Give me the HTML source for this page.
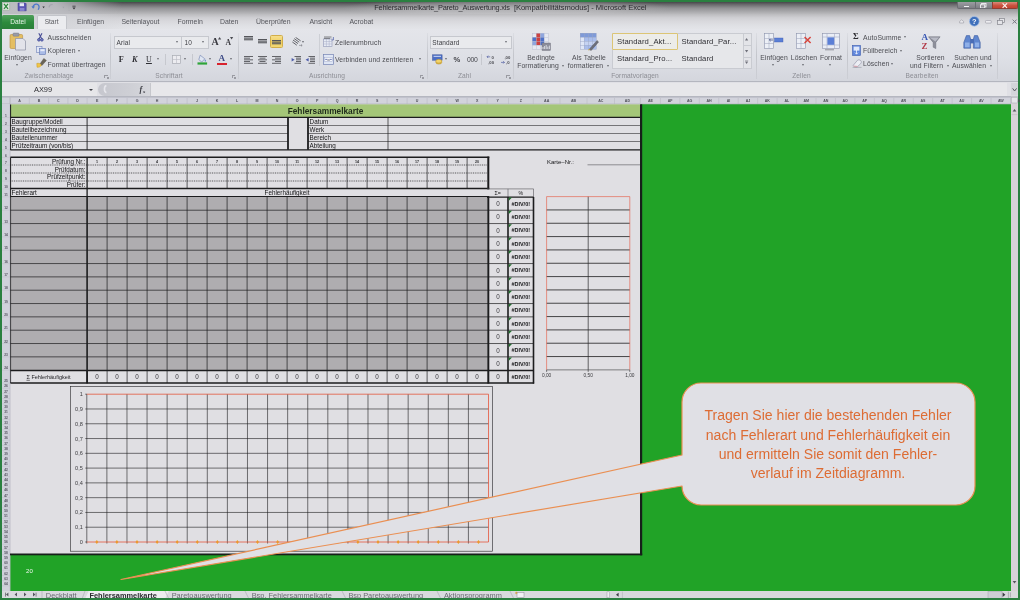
<!DOCTYPE html><html lang="de"><head><meta charset="utf-8"><title>Fehlersammelkarte_Pareto_Auswertung.xls - Microsoft Excel</title><style>

*{box-sizing:border-box;margin:0;padding:0}
html,body{width:1020px;height:600px;overflow:hidden}
body{background:#2a8040;font-family:"Liberation Sans",sans-serif;position:relative;color:#3a3a3e}
#win,#sheet{filter:blur(.25px)}
#win{position:absolute;left:2px;top:2px;width:1016px;height:596px;overflow:hidden;background:#e2e2e5}
.abs{position:absolute}
#titlebar{left:0;top:0;width:1016px;height:11.5px;background:linear-gradient(#47474a 0%,#68686b 20%,#919194 50%,#b9b9bc 100%)}
#titlebar .fadeL{left:0;top:0;width:120px;height:11.5px;background:linear-gradient(90deg,#bcbdc2 0%,rgba(188,189,194,.92) 45%,rgba(188,189,194,0) 100%)}
#titlebar .fadeR{left:340px;top:0;width:330px;height:11.5px;background:radial-gradient(ellipse 50% 90% at 50% 50%,rgba(205,205,208,.5) 0%,rgba(205,205,208,.35) 60%,rgba(205,205,208,0) 100%)}
#title{left:372.2px;top:1px;font-size:7.4px;line-height:9px;color:#2c2c30;white-space:nowrap;letter-spacing:-0.05px}
#tabrow{left:0;top:11.5px;width:1016px;height:15.5px;background:linear-gradient(#bbbbbe 0%,#cfcfd3 25%,#d9d9dd 50%,#e0e1e5 80%,#e3e4e8 100%)}
#tabrow .fadeL{left:0;top:0;width:130px;height:16px;background:linear-gradient(90deg,#d2d3d7 0%,rgba(210,211,215,.9) 40%,rgba(210,211,215,0) 100%)}
.tab{position:absolute;top:3px;font-size:6.9px;line-height:10px;color:#55565c;white-space:nowrap}
#datei{left:0;top:1.2px;width:32px;height:14.3px;background:linear-gradient(#4fa05a,#2c8a3c 55%,#2a7f38);border-radius:1.5px 1.5px 0 0;color:#e9f3ea;font-size:6.6px;line-height:13px;text-align:center}
#start{left:34.6px;top:1.6px;width:30px;height:14.4px;background:#ebecef;border:0.5px solid #c3c5ca;border-bottom:none;border-radius:2px 2px 0 0;color:#5a5b60;font-size:6.6px;line-height:12.5px;text-align:center}
#ribbon{left:0;top:27px;width:1016px;height:53px;background:linear-gradient(#e4e5ea 0%,#dee0e6 55%,#d4d6dd 100%);border-bottom:1px solid #b4b6bf}
.gsep{position:absolute;top:3px;width:1px;height:46px;background:linear-gradient(rgba(190,192,198,.2),#c3c5cb 50%,rgba(190,192,198,.4))}
.glabel{position:absolute;top:40.5px;font-size:6.3px;line-height:9px;color:#8a8b92;white-space:nowrap;text-align:center}
.rt{position:absolute;letter-spacing:.1px;font-size:6.8px;line-height:9px;color:#4c4d53;white-space:nowrap}
.launch{position:absolute;top:45px;width:3.5px;height:3.5px;border-left:.7px solid #9a9ba2;border-top:.7px solid #9a9ba2}
.launch:after{content:"";position:absolute;left:1.5px;top:1.5px;width:2px;height:2px;background:#9a9ba2}
#fbar{left:0;top:80px;width:1016px;height:15px;background:#e0e0e5;border-bottom:1px solid #c4c5cb}
#namebox{left:0;top:1px;width:95px;height:12.5px;background:#e6e6e9}
#fxarea{left:95.5px;top:1px;width:52px;height:12.5px;background:linear-gradient(90deg,#c6c7ce,#cecfd5 60%,#d6d7dc);border-radius:7px 0 0 7px}
#finput{left:147.5px;top:1px;width:857px;height:12.5px;background:#e7e7ea;border-left:1px solid #c6c7cc}

</style></head><body>
<div id="win">
<div id="titlebar" class="abs"><div class="abs fadeL"></div><div class="abs fadeR"></div>
<div id="title" class="abs"><span style="letter-spacing:-.2px">Fehlersammelkarte_Pareto_Auswertung.xls</span><span class="abs" style="left:139.7px;top:0;font-size:7.6px">[Kompatibilitätsmodus] - Microsoft Excel</span></div>
</div>
<div id="tabrow" class="abs"><div class="abs fadeL"></div>
<div id="datei" class="abs">Datei</div><div id="start" class="abs">Start</div>
<div class="tab" style="left:75px">Einfügen</div>
<div class="tab" style="left:119.5px">Seitenlayout</div>
<div class="tab" style="left:175.5px">Formeln</div>
<div class="tab" style="left:218px">Daten</div>
<div class="tab" style="left:254px">Überprüfen</div>
<div class="tab" style="left:307.5px">Ansicht</div>
<div class="tab" style="left:347.5px">Acrobat</div>
</div>
<svg class="abs" style="left:0;top:0" width="80" height="12" viewBox="0 0 80 12">
<rect x=".6" y=".6" width="7" height="7.6" rx=".8" fill="#dfe8dc" stroke="#8aa48a" stroke-width=".5"/><path d="M2 1.8l4 5M6 1.8l-4 5" stroke="#2e8a3c" stroke-width="1.3"/>
<path d="M16 1h7.4l.8.8v7H16z" fill="#5b55b4" stroke="#3f3a8a" stroke-width=".5"/><rect x="17.6" y="1.2" width="4.4" height="3" fill="#e4e6f4"/><rect x="17.8" y="6" width="4.6" height="2.8" fill="#8a86d0"/>
<path d="M31 5.6c0-2.4 1.8-3.6 3.6-3.4 1.8.2 2.8 1.8 2.4 3.6l-.8 2" fill="none" stroke="#4d79c8" stroke-width="1.3"/><path d="M29.4 4.2l1.8 2.6 1.8-2.4z" fill="#4d79c8"/>
<path d="M40.4 4.6h2.4l-1.2 1.6z" fill="#2e2e33"/>
<path d="M47 5.4c.4-2 2-3 3.6-2.8" fill="none" stroke="#a4a5ae" stroke-width="1.1"/><path d="M60.4 4.8h2l-1 1.4z" fill="#a0a1aa"/>
<path d="M67 1.6v8" stroke="#a6a7ae" stroke-width=".6" stroke-dasharray=".8 .8"/>
<path d="M70.4 4.2h3.2" stroke="#34343a" stroke-width=".8"/><path d="M70.4 5.6h3.2L72 7.6z" fill="#34343a"/>
</svg>
<div id="ribbon" class="abs"></div>
<svg class="abs" style="left:7.4px;top:30.0px" width="18" height="19" viewBox="0 0 18 19"><rect x="1" y="2.5" width="12.6" height="14" rx="1.2" fill="#e4be62" stroke="#b88d3a" stroke-width=".6"/><rect x="4" y="1" width="6" height="3.2" rx=".8" fill="#9a9ba6" stroke="#70717c" stroke-width=".4"/><path d="M6.5 6.5h7.5l2.5 2.5v9h-10z" fill="#e2e3ea" stroke="#8c90a4" stroke-width=".7"/></svg>
<div class="rt" style="left:-44.0px;width:120px;text-align:center;top:50.8px;font-size:6.8px;color:#4c4d53;">Einfügen</div>
<div class="abs" style="left:14.3px;top:62.1px;width:0;height:0;border-left:1.7px solid transparent;border-right:1.7px solid transparent;border-top:2.1px solid #6a6b72"></div>
<svg class="abs" style="left:35.0px;top:31.0px" width="7" height="9" viewBox="0 0 7 9"><path d="M1.8 0.3l2.9 5.4M5 0.3L2.1 5.7" stroke="#4a4f96" stroke-width="1.1" fill="none"/><circle cx="1.9" cy="6.8" r="1.3" fill="#8088c4" stroke="#3f4a9a" stroke-width=".9"/><circle cx="4.9" cy="6.8" r="1.3" fill="#8088c4" stroke="#3f4a9a" stroke-width=".9"/></svg>
<div class="rt" style="left:45.6px;top:30.5px;font-size:6.8px;color:#4c4d53;">Ausschneiden</div>
<svg class="abs" style="left:34.0px;top:44.0px" width="10" height="9" viewBox="0 0 10 9"><rect x=".5" y=".5" width="5.5" height="6" fill="#dfe5f4" stroke="#6f80b8" stroke-width=".6"/><rect x="3.6" y="2.4" width="5.8" height="6" fill="#a9bbe6" stroke="#5f74b4" stroke-width=".6"/><rect x="4.4" y="3.2" width="4.2" height="2" fill="#e6ebf8"/></svg>
<div class="rt" style="left:45.6px;top:44.0px;font-size:6.8px;color:#4c4d53;">Kopieren</div>
<div class="abs" style="left:76.3px;top:47.9px;width:0;height:0;border-left:1.7px solid transparent;border-right:1.7px solid transparent;border-top:2.1px solid #6a6b72"></div>
<svg class="abs" style="left:33.5px;top:56.0px" width="11" height="10" viewBox="0 0 11 10"><path d="M7.8 0.4l2.6 2-4.5 5.2-2-1.5z" fill="#6a6458" stroke="#4d483e" stroke-width=".4"/><path d="M0.8 5.4c2-.4 3.4.2 4.6 1.6-.6 1.6-2.3 2.6-4.4 2.2z" fill="#f0c548" stroke="#c79a2a" stroke-width=".5"/></svg>
<div class="rt" style="left:45.6px;top:57.5px;font-size:6.8px;color:#4c4d53;">Format übertragen</div>
<div class="rt" style="left:-13.0px;width:120px;text-align:center;top:69.1px;font-size:6.6px;color:#8d8e95;">Zwischenablage</div>
<div class="launch" style="left:102.0px;top:72.5px"></div>
<div class="gsep" style="left:108.0px;top:31px"></div>
<div class="abs" style="left:112.0px;top:34.0px;width:68px;height:12.5px;background:#e9eaed;border:.7px solid #c6c8ce"></div>
<div class="abs" style="left:180.0px;top:34.0px;width:26.5px;height:12.5px;background:#e9eaed;border:.7px solid #c6c8ce;border-left:none"></div>
<div class="rt" style="left:114.5px;top:35.5px;font-size:6.5px;color:#3c3d42;">Arial</div>
<div class="abs" style="left:174.3px;top:39.4px;width:0;height:0;border-left:1.7px solid transparent;border-right:1.7px solid transparent;border-top:2.1px solid #6a6b72"></div>
<div class="rt" style="left:182.5px;top:35.5px;font-size:6.5px;color:#3c3d42;">10</div>
<div class="abs" style="left:200.3px;top:39.4px;width:0;height:0;border-left:1.7px solid transparent;border-right:1.7px solid transparent;border-top:2.1px solid #6a6b72"></div>
<div class="rt" style="left:209.5px;top:35.1px;font-size:10px;color:#3a3a40;font-family:'Liberation Serif',serif;font-weight:bold;line-height:9px">A</div>
<svg class="abs" style="left:216.0px;top:35.0px" width="4" height="3" viewBox="0 0 4 3"><path d="M0 2.6L1.6 0l1.6 2.6z" fill="#4a4b52"/></svg>
<div class="rt" style="left:223.5px;top:36.1px;font-size:7.6px;color:#3a3a40;font-family:'Liberation Serif',serif;font-weight:bold;line-height:9px">A</div>
<svg class="abs" style="left:228.3px;top:35.3px" width="4" height="3" viewBox="0 0 4 3"><path d="M0 0L1.6 2.4 3.2 0z" fill="#4a4b52"/></svg>
<div class="rt" style="left:116.8px;top:52.5px;font-size:8.2px;color:#2e2e33;font-family:'Liberation Serif',serif;font-weight:bold">F</div>
<div class="rt" style="left:130.0px;top:52.5px;font-size:8.2px;color:#2e2e33;font-family:'Liberation Serif',serif;font-weight:bold;font-style:italic">K</div>
<div class="rt" style="left:144.0px;top:52.5px;font-size:8px;color:#2e2e33;font-family:'Liberation Serif',serif;text-decoration:underline">U</div>
<div class="abs" style="left:155.3px;top:56.4px;width:0;height:0;border-left:1.7px solid transparent;border-right:1.7px solid transparent;border-top:2.1px solid #6a6b72"></div>
<div class="abs" style="left:163.0px;top:52.0px;width:0.7px;height:11px;background:#c6c8ce"></div>
<svg class="abs" style="left:170.0px;top:52.5px" width="9" height="9" viewBox="0 0 9 9"><rect x=".5" y=".5" width="8" height="8" fill="#ececf0" stroke="#a9abb3" stroke-width=".7"/><path d="M4.5 .5v8M.5 4.5h8" stroke="#b9bbc2" stroke-width=".6"/></svg>
<div class="abs" style="left:182.3px;top:56.4px;width:0;height:0;border-left:1.7px solid transparent;border-right:1.7px solid transparent;border-top:2.1px solid #6a6b72"></div>
<div class="abs" style="left:190.0px;top:52.0px;width:0.7px;height:11px;background:#c6c8ce"></div>
<svg class="abs" style="left:194.5px;top:52.0px" width="11" height="11" viewBox="0 0 11 11"><path d="M3.2 1.2l4.6 3.6-3 3.2-3-2.4z" fill="#dfe6f2" stroke="#6d7fae" stroke-width=".6"/><path d="M8 5.2c.8 1 1.2 1.7.6 2.3-.6.5-1.2-.2-.6-2.3z" fill="#4d7fd0"/><rect x=".5" y="8.4" width="9.6" height="2.2" fill="#2fa43a"/></svg>
<div class="abs" style="left:207.3px;top:56.4px;width:0;height:0;border-left:1.7px solid transparent;border-right:1.7px solid transparent;border-top:2.1px solid #6a6b72"></div>
<div class="rt" style="left:216.6px;top:51.7px;font-size:9px;color:#3c4a86;font-family:'Liberation Serif',serif;font-weight:bold">A</div>
<div class="abs" style="left:215.3px;top:60.5px;width:9.8px;height:2.2px;background:#d8232e"></div>
<div class="abs" style="left:228.3px;top:56.4px;width:0;height:0;border-left:1.7px solid transparent;border-right:1.7px solid transparent;border-top:2.1px solid #6a6b72"></div>
<div class="rt" style="left:107.0px;width:120px;text-align:center;top:69.1px;font-size:6.6px;color:#8d8e95;">Schriftart</div>
<div class="launch" style="left:229.5px;top:72.5px"></div>
<div class="gsep" style="left:236.0px;top:31px"></div>
<svg class="abs" style="left:242.0px;top:34.0px" width="9" height="8" viewBox="0 0 9 8"><rect x="0" y="0" width="9" height="1.1" fill="#55565b"/><rect x="0" y="1.6" width="9" height="1.1" fill="#55565b"/><rect x="0" y="3.2" width="9" height="1.1" fill="#55565b"/></svg>
<svg class="abs" style="left:256.0px;top:35.0px" width="9" height="8" viewBox="0 0 9 8"><rect x="0" y="2" width="9" height="1.1" fill="#55565b"/><rect x="0" y="3.6" width="9" height="1.1" fill="#55565b"/><rect x="0" y="5.2" width="9" height="1.1" fill="#55565b"/></svg>
<div class="abs" style="left:268.0px;top:33.3px;width:13.3px;height:13.2px;background:linear-gradient(#f6df8c,#efcf62 55%,#f3d873);border:.7px solid #d2ae4a;border-radius:1.4px"></div>
<svg class="abs" style="left:270.2px;top:35.2px" width="9" height="8" viewBox="0 0 9 8"><rect x="0" y="3" width="9" height="1.1" fill="#55565b"/><rect x="0" y="4.6" width="9" height="1.1" fill="#55565b"/><rect x="0" y="6.2" width="9" height="1.1" fill="#55565b"/></svg>
<svg class="abs" style="left:289.5px;top:34.5px" width="11" height="10" viewBox="0 0 11 10"><path d="M1 3l5 3.6M2.2 1.6l5 3.6M3.6.4l5 3.4M.4 5l4.4 3.2" stroke="#55565b" stroke-width=".9"/><path d="M7 8.4h3M9 7.4l1.2 1-1.2 1" stroke="#6a6b72" stroke-width=".5" fill="none"/></svg>
<div class="abs" style="left:300.3px;top:39.4px;width:0;height:0;border-left:1.7px solid transparent;border-right:1.7px solid transparent;border-top:2.1px solid #6a6b72"></div>
<svg class="abs" style="left:242.0px;top:53.5px" width="9" height="8" viewBox="0 0 9 8"><rect x="0" y="0" width="9" height="0.9" fill="#55565b"/><rect x="0" y="1.7" width="6" height="0.9" fill="#55565b"/><rect x="0" y="3.4" width="9" height="0.9" fill="#55565b"/><rect x="0" y="5.1" width="6" height="0.9" fill="#55565b"/><rect x="0" y="6.8" width="9" height="0.9" fill="#55565b"/></svg>
<svg class="abs" style="left:256.0px;top:53.5px" width="9" height="8" viewBox="0 0 9 8"><rect x="0" y="0" width="9" height="0.9" fill="#55565b"/><rect x="1.5" y="1.7" width="6" height="0.9" fill="#55565b"/><rect x="0" y="3.4" width="9" height="0.9" fill="#55565b"/><rect x="1.5" y="5.1" width="6" height="0.9" fill="#55565b"/><rect x="0" y="6.8" width="9" height="0.9" fill="#55565b"/></svg>
<svg class="abs" style="left:270.0px;top:53.5px" width="9" height="8" viewBox="0 0 9 8"><rect x="0" y="0" width="9" height="0.9" fill="#55565b"/><rect x="3" y="1.7" width="6" height="0.9" fill="#55565b"/><rect x="0" y="3.4" width="9" height="0.9" fill="#55565b"/><rect x="3" y="5.1" width="6" height="0.9" fill="#55565b"/><rect x="0" y="6.8" width="9" height="0.9" fill="#55565b"/></svg>
<svg class="abs" style="left:289.0px;top:53.5px" width="10.5" height="8" viewBox="0 0 10.5 8"><rect x="3.5" y="0" width="6.5" height=".9" fill="#55565b"/><rect x="5" y="1.7" width="5" height=".9" fill="#55565b"/><rect x="5" y="3.4" width="5" height=".9" fill="#55565b"/><rect x="5" y="5.1" width="5" height=".9" fill="#55565b"/><rect x="3.5" y="6.8" width="6.5" height=".9" fill="#55565b"/><path d="M3.6 3.8L.6 2v3.6z" fill="#4b5aa8"/></svg>
<svg class="abs" style="left:303.0px;top:53.5px" width="10.5" height="8" viewBox="0 0 10.5 8"><rect x="3.5" y="0" width="6.5" height=".9" fill="#55565b"/><rect x="5" y="1.7" width="5" height=".9" fill="#55565b"/><rect x="5" y="3.4" width="5" height=".9" fill="#55565b"/><rect x="5" y="5.1" width="5" height=".9" fill="#55565b"/><rect x="3.5" y="6.8" width="6.5" height=".9" fill="#55565b"/><path d="M.6 3.8l3-1.8v3.6z" fill="#4b5aa8"/></svg>
<div class="abs" style="left:317.0px;top:32.0px;width:0.7px;height:32px;background:#cdcfd5"></div>
<svg class="abs" style="left:320.5px;top:34.0px" width="11" height="11" viewBox="0 0 11 11"><rect x=".5" y="3" width="8.5" height="7.5" fill="#e8ecf5" stroke="#8f97b4" stroke-width=".6"/><path d="M.5 5.6h8.5M.5 8h8.5M3.4 3v7.5M6.2 3v7.5" stroke="#a4abc4" stroke-width=".5"/><path d="M1 1h7.5M1 2.4h6" stroke="#55565b" stroke-width=".7"/><path d="M10.4 1v3H8.6" stroke="#4b5aa8" stroke-width=".7" fill="none"/></svg>
<div class="rt" style="left:333.0px;top:35.5px;font-size:6.8px;color:#4c4d53;">Zeilenumbruch</div>
<svg class="abs" style="left:320.5px;top:51.5px" width="11" height="11" viewBox="0 0 11 11"><rect x=".5" y=".5" width="10" height="10" fill="#dfe6f4" stroke="#7484b4" stroke-width=".7"/><rect x="1.5" y="3.4" width="8" height="4" fill="#f4f6fb" stroke="#8f9cc4" stroke-width=".4"/><path d="M2.2 5.4h2.2M8.8 5.4H6.6" stroke="#3c4c98" stroke-width=".7"/><text x="5.5" y="7" font-size="3.6" text-anchor="middle" fill="#3c3d44" font-family="Liberation Sans,sans-serif">a</text></svg>
<div class="rt" style="left:333.0px;top:52.5px;font-size:6.8px;color:#4c4d53;">Verbinden und zentrieren</div>
<div class="abs" style="left:416.8px;top:56.4px;width:0;height:0;border-left:1.7px solid transparent;border-right:1.7px solid transparent;border-top:2.1px solid #6a6b72"></div>
<div class="rt" style="left:265.0px;width:120px;text-align:center;top:69.1px;font-size:6.6px;color:#8d8e95;">Ausrichtung</div>
<div class="launch" style="left:417.5px;top:72.5px"></div>
<div class="gsep" style="left:424.5px;top:31px"></div>
<div class="abs" style="left:428.0px;top:33.5px;width:81.5px;height:13px;background:#e9eaed;border:.7px solid #c6c8ce"></div>
<div class="rt" style="left:430.3px;top:35.5px;font-size:6.5px;color:#3c3d42;">Standard</div>
<div class="abs" style="left:503.3px;top:39.4px;width:0;height:0;border-left:1.7px solid transparent;border-right:1.7px solid transparent;border-top:2.1px solid #6a6b72"></div>
<svg class="abs" style="left:430.0px;top:51.5px" width="11" height="11" viewBox="0 0 11 11"><rect x=".5" y=".8" width="9.6" height="5.4" fill="#4d6fc4" stroke="#3b559c" stroke-width=".5"/><rect x="1.6" y="1.8" width="7.4" height="1.2" fill="#b9c8ee"/><ellipse cx="6.8" cy="8.2" rx="3" ry="1.9" fill="#e8c04e" stroke="#b48c28" stroke-width=".5"/><ellipse cx="6.8" cy="7.2" rx="3" ry="1.9" fill="#f2d46c" stroke="#b48c28" stroke-width=".5"/></svg>
<div class="abs" style="left:443.3px;top:56.4px;width:0;height:0;border-left:1.7px solid transparent;border-right:1.7px solid transparent;border-top:2.1px solid #6a6b72"></div>
<div class="rt" style="left:451.5px;top:52.5px;font-size:7.6px;color:#45464c;font-weight:bold">%</div>
<div class="rt" style="left:465.0px;top:52.5px;font-size:6.8px;color:#45464c;letter-spacing:-.3px">000</div>
<div class="abs" style="left:479.0px;top:52.0px;width:0.7px;height:11px;background:#c6c8ce"></div>
<svg class="abs" style="left:484.0px;top:52.0px" width="11" height="11" viewBox="0 0 11 11"><text x="5.6" y="4.6" font-size="4.2" font-weight="bold" fill="#45464c" font-family="Liberation Sans,sans-serif">0</text><text x="2.2" y="10" font-size="4.2" font-weight="bold" fill="#45464c" font-family="Liberation Sans,sans-serif">,00</text><path d="M4.2 2.8H1M2.2 1.6L1 2.8l1.2 1.2" stroke="#3c4c98" stroke-width=".6" fill="none"/></svg>
<svg class="abs" style="left:497.5px;top:52.0px" width="11" height="11" viewBox="0 0 11 11"><text x="4.4" y="4.6" font-size="4.2" font-weight="bold" fill="#45464c" font-family="Liberation Sans,sans-serif">,00</text><text x="6" y="10" font-size="4.2" font-weight="bold" fill="#45464c" font-family="Liberation Sans,sans-serif">,0</text><path d="M1 8.4h3.4M3.2 7.2l1.2 1.2-1.2 1.2" stroke="#3c4c98" stroke-width=".6" fill="none"/></svg>
<div class="rt" style="left:402.5px;width:120px;text-align:center;top:69.1px;font-size:6.6px;color:#8d8e95;">Zahl</div>
<div class="launch" style="left:504.0px;top:72.5px"></div>
<div class="gsep" style="left:511.0px;top:31px"></div>
<svg class="abs" style="left:530.0px;top:31.0px" width="19" height="18" viewBox="0 0 19 18"><rect x="0" y="0" width="16.5" height="16.5" fill="#b9bfd2"/><rect x="0.5" y="0.5" width="3.6" height="3.6" fill="#e6e9f2"/><rect x="4.5" y="0.5" width="3.6" height="3.6" fill="#cc4140"/><rect x="8.5" y="0.5" width="3.6" height="3.6" fill="#8fa6de"/><rect x="12.5" y="0.5" width="3.6" height="3.6" fill="#e6e9f2"/><rect x="0.5" y="4.5" width="3.6" height="3.6" fill="#4f71c8"/><rect x="4.5" y="4.5" width="3.6" height="3.6" fill="#cc4140"/><rect x="8.5" y="4.5" width="3.6" height="3.6" fill="#4f71c8"/><rect x="12.5" y="4.5" width="3.6" height="3.6" fill="#e6e9f2"/><rect x="0.5" y="8.5" width="3.6" height="3.6" fill="#8fa6de"/><rect x="4.5" y="8.5" width="3.6" height="3.6" fill="#cc4140"/><rect x="8.5" y="8.5" width="3.6" height="3.6" fill="#4f71c8"/><rect x="12.5" y="8.5" width="3.6" height="3.6" fill="#e6e9f2"/><rect x="0.5" y="12.5" width="3.6" height="3.6" fill="#e6e9f2"/><rect x="4.5" y="12.5" width="3.6" height="3.6" fill="#e6e9f2"/><rect x="8.5" y="12.5" width="3.6" height="3.6" fill="#e6e9f2"/><rect x="12.5" y="12.5" width="3.6" height="3.6" fill="#e6e9f2"/><rect x="10" y="10" width="8.5" height="7.5" fill="#8b8d9a" stroke="#6a6c78" stroke-width=".4"/><path d="M11 16v-2M12.6 16v-3M14.2 16v-4M15.8 16v-2.4M17.4 16v-3.4" stroke="#e9ebf2" stroke-width=".8"/></svg>
<div class="rt" style="left:479.0px;width:120px;text-align:center;top:50.8px;font-size:6.8px;color:#4c4d53;">Bedingte</div>
<div class="rt" style="left:478.0px;width:120px;text-align:center;top:58.8px;font-size:6.8px;color:#4c4d53;">Formatierung&nbsp;&nbsp;</div>
<div class="abs" style="left:559.8px;top:63.4px;width:0;height:0;border-left:1.7px solid transparent;border-right:1.7px solid transparent;border-top:2.1px solid #6a6b72"></div>
<svg class="abs" style="left:577.5px;top:31.0px" width="19" height="18" viewBox="0 0 19 18"><rect x="0" y="0" width="16.5" height="16.5" fill="#9aa6c6"/><rect x="0.5" y="0.5" width="3.6" height="3.6" fill="#7f9ad8"/><rect x="4.5" y="0.5" width="3.6" height="3.6" fill="#7f9ad8"/><rect x="8.5" y="0.5" width="3.6" height="3.6" fill="#7f9ad8"/><rect x="12.5" y="0.5" width="3.6" height="3.6" fill="#7f9ad8"/><rect x="0.5" y="4.5" width="3.6" height="3.6" fill="#dfe6f6"/><rect x="4.5" y="4.5" width="3.6" height="3.6" fill="#a9bdec"/><rect x="8.5" y="4.5" width="3.6" height="3.6" fill="#a9bdec"/><rect x="12.5" y="4.5" width="3.6" height="3.6" fill="#a9bdec"/><rect x="0.5" y="8.5" width="3.6" height="3.6" fill="#dfe6f6"/><rect x="4.5" y="8.5" width="3.6" height="3.6" fill="#c6d3f2"/><rect x="8.5" y="8.5" width="3.6" height="3.6" fill="#c6d3f2"/><rect x="12.5" y="8.5" width="3.6" height="3.6" fill="#c6d3f2"/><rect x="0.5" y="12.5" width="3.6" height="3.6" fill="#dfe6f6"/><rect x="4.5" y="12.5" width="3.6" height="3.6" fill="#a9bdec"/><rect x="8.5" y="12.5" width="3.6" height="3.6" fill="#a9bdec"/><rect x="12.5" y="12.5" width="3.6" height="3.6" fill="#a9bdec"/><path d="M9 16.5l8-9 1.6 1.4-7.4 8.6z" fill="#6d6f7a" stroke="#4f5058" stroke-width=".4"/><path d="M8.2 17.4l.8-1.6 1.4 1z" fill="#c8a13c"/></svg>
<div class="rt" style="left:527.0px;width:120px;text-align:center;top:50.8px;font-size:6.8px;color:#4c4d53;">Als Tabelle</div>
<div class="rt" style="left:525.5px;width:120px;text-align:center;top:58.8px;font-size:6.8px;color:#4c4d53;">formatieren&nbsp;&nbsp;</div>
<div class="abs" style="left:604.8px;top:63.4px;width:0;height:0;border-left:1.7px solid transparent;border-right:1.7px solid transparent;border-top:2.1px solid #6a6b72"></div>
<div class="abs" style="left:609.5px;top:30.5px;width:140px;height:36px;background:#e6e7ea;border:.7px solid #c9cbd1"></div>
<div class="abs" style="left:610.0px;top:31.0px;width:65.5px;height:16.5px;background:#ecece9;border:1.2px solid #dcc575;border-radius:1px"></div>
<div class="abs" style="left:740.5px;top:30.5px;width:9px;height:36px;background:#e3e4e8;border:.7px solid #c9cbd1"></div>
<div class="abs" style="left:740.5px;top:42.5px;width:9px;height:0.7px;background:#c9cbd1"></div>
<div class="abs" style="left:740.5px;top:54.5px;width:9px;height:0.7px;background:#c9cbd1"></div>
<svg class="abs" style="left:743.3px;top:35.5px" width="4" height="3" viewBox="0 0 4 3"><path d="M0 2.4L1.6 0l1.6 2.4z" fill="#70717a"/></svg>
<svg class="abs" style="left:743.3px;top:47.5px" width="4" height="3" viewBox="0 0 4 3"><path d="M0 0L1.6 2.4 3.2 0z" fill="#70717a"/></svg>
<svg class="abs" style="left:743.3px;top:58.0px" width="4" height="5" viewBox="0 0 4 5"><path d="M0 0h3.2" stroke="#70717a" stroke-width=".7"/><path d="M0 1.6L1.6 4 3.2 1.6z" fill="#70717a"/></svg>
<div class="rt" style="left:615.0px;top:34.7px;font-size:7.7px;color:#2f2f34;">Standard_Akt...</div>
<div class="rt" style="left:679.5px;top:34.7px;font-size:7.7px;color:#2f2f34;">Standard_Par...</div>
<div class="rt" style="left:615.0px;top:51.8px;font-size:7.7px;color:#2f2f34;">Standard_Pro...</div>
<div class="rt" style="left:679.5px;top:51.8px;font-size:7.7px;color:#2f2f34;">Standard</div>
<div class="rt" style="left:573.0px;width:120px;text-align:center;top:69.1px;font-size:6.6px;color:#8d8e95;">Formatvorlagen</div>
<div class="gsep" style="left:753.5px;top:31px"></div>
<svg class="abs" style="left:762.0px;top:31.0px" width="20" height="17" viewBox="0 0 20 17"><rect x=".5" y=".5" width="9" height="15" fill="#eceff6" stroke="#8c93ac" stroke-width=".6"/><path d="M.5 5.5h9M.5 10.5h9M5 .5v15" stroke="#9aa1ba" stroke-width=".5"/><rect x="10.5" y="5" width="8.5" height="4" fill="#5b7fd6" stroke="#3f5cae" stroke-width=".4"/><path d="M9 7H5.4M6.6 5.8L5.4 7l1.2 1.2" stroke="#2c3a78" stroke-width=".7" fill="none"/></svg>
<div class="rt" style="left:712.0px;width:120px;text-align:center;top:50.8px;font-size:6.8px;color:#4c4d53;">Einfügen</div>
<div class="abs" style="left:770.3px;top:62.4px;width:0;height:0;border-left:1.7px solid transparent;border-right:1.7px solid transparent;border-top:2.1px solid #6a6b72"></div>
<svg class="abs" style="left:794.0px;top:31.0px" width="17" height="17" viewBox="0 0 17 17"><rect x=".5" y=".5" width="9" height="15" fill="#eceff6" stroke="#8c93ac" stroke-width=".6"/><path d="M.5 5.5h9M.5 10.5h9M5 .5v15" stroke="#9aa1ba" stroke-width=".5"/><path d="M8.6 4l6 6M14.6 4l-6 6" stroke="#d8443c" stroke-width="1.5"/></svg>
<div class="rt" style="left:742.0px;width:120px;text-align:center;top:50.8px;font-size:6.8px;color:#4c4d53;">Löschen</div>
<div class="abs" style="left:800.3px;top:62.4px;width:0;height:0;border-left:1.7px solid transparent;border-right:1.7px solid transparent;border-top:2.1px solid #6a6b72"></div>
<svg class="abs" style="left:820.0px;top:31.0px" width="19" height="18" viewBox="0 0 19 18"><rect x=".5" y=".5" width="17" height="15" fill="#e9edf6" stroke="#8c93ac" stroke-width=".6"/><path d="M.5 4h17M.5 12h17M5 .5v15M12.5 .5v15" stroke="#9aa1ba" stroke-width=".5"/><rect x="5.4" y="4.4" width="6.8" height="7.4" fill="#5b7fd6"/><path d="M3 16.8h9" stroke="#6a6b74" stroke-width=".7"/></svg>
<div class="rt" style="left:769.0px;width:120px;text-align:center;top:50.8px;font-size:6.8px;color:#4c4d53;">Format</div>
<div class="abs" style="left:827.3px;top:62.4px;width:0;height:0;border-left:1.7px solid transparent;border-right:1.7px solid transparent;border-top:2.1px solid #6a6b72"></div>
<div class="rt" style="left:739.5px;width:120px;text-align:center;top:69.1px;font-size:6.6px;color:#8d8e95;">Zellen</div>
<div class="gsep" style="left:844.5px;top:31px"></div>
<div class="rt" style="left:851.0px;top:30.3px;font-size:8.6px;color:#2c2c31;font-family:'Liberation Serif',serif;font-weight:bold">Σ</div>
<div class="rt" style="left:861.0px;top:30.5px;font-size:6.8px;color:#4c4d53;">AutoSumme</div>
<div class="abs" style="left:902.3px;top:34.4px;width:0;height:0;border-left:1.7px solid transparent;border-right:1.7px solid transparent;border-top:2.1px solid #6a6b72"></div>
<svg class="abs" style="left:850.0px;top:42.5px" width="9" height="11" viewBox="0 0 9 11"><rect x=".5" y=".5" width="8" height="10" fill="#5f86dc" stroke="#3f5cae" stroke-width=".6"/><rect x="1.6" y="1.6" width="5.8" height="4" fill="#dfe8fa"/><path d="M4.5 5v4M3 7.6l1.5 1.6L6 7.6" stroke="#f4f6fc" stroke-width=".8" fill="none"/></svg>
<div class="rt" style="left:861.0px;top:43.8px;font-size:6.8px;color:#4c4d53;">Füllbereich</div>
<div class="abs" style="left:898.3px;top:47.7px;width:0;height:0;border-left:1.7px solid transparent;border-right:1.7px solid transparent;border-top:2.1px solid #6a6b72"></div>
<svg class="abs" style="left:849.5px;top:57.0px" width="11" height="9" viewBox="0 0 11 9"><path d="M1.2 6.4L5.4 1.4c.8-.9 2.6-.6 3.4.3.8.9.6 2.2-.2 3L5.2 8H2.4z" fill="#eceef4" stroke="#8a8ca0" stroke-width=".6"/><path d="M1.2 6.4L2.4 8h2.8l1-1z" fill="#d7a9b4"/><path d="M.6 8.4h9" stroke="#8a8c98" stroke-width=".5"/></svg>
<div class="rt" style="left:861.0px;top:57.0px;font-size:6.8px;color:#4c4d53;">Löschen</div>
<div class="abs" style="left:889.3px;top:60.9px;width:0;height:0;border-left:1.7px solid transparent;border-right:1.7px solid transparent;border-top:2.1px solid #6a6b72"></div>
<div class="rt" style="left:919.5px;top:31.0px;font-size:9px;color:#3656b4;font-family:'Liberation Serif',serif;font-weight:bold">A</div>
<div class="rt" style="left:919.5px;top:40.0px;font-size:9px;color:#b23a48;font-family:'Liberation Serif',serif;font-weight:bold">Z</div>
<svg class="abs" style="left:926.0px;top:33.5px" width="13" height="14" viewBox="0 0 13 14"><path d="M.5 .8h11.6L7.8 6.4v6.2l-2.6-1.4V6.4z" fill="#8d8f9a" stroke="#6b6d78" stroke-width=".5"/><path d="M1.6 1.4h9.4L7.4 5.6z" fill="#b9bbc6"/></svg>
<div class="rt" style="left:868.5px;width:120px;text-align:center;top:50.8px;font-size:6.8px;color:#4c4d53;">Sortieren</div>
<div class="rt" style="left:866.5px;width:120px;text-align:center;top:58.8px;font-size:6.8px;color:#4c4d53;">und Filtern&nbsp;&nbsp;</div>
<div class="abs" style="left:944.8px;top:63.4px;width:0;height:0;border-left:1.7px solid transparent;border-right:1.7px solid transparent;border-top:2.1px solid #6a6b72"></div>
<svg class="abs" style="left:961.0px;top:31.5px" width="19" height="16" viewBox="0 0 19 16"><path d="M3.4 1.6h3.2l1 3.4v9.2H.8V8.4z" fill="#5f86cf" stroke="#3d5a9e" stroke-width=".6"/><path d="M11.4 1.6h3.2l2.6 6.8v5.8h-6.8V5z" fill="#5f86cf" stroke="#3d5a9e" stroke-width=".6"/><rect x="7.2" y="5" width="3.8" height="4.4" fill="#4a6db6"/><path d="M2 8.6h4.6v4.6H2zM12 8.6h4.2v4.6H12z" fill="#8fb0e8"/></svg>
<div class="rt" style="left:911.0px;width:120px;text-align:center;top:50.8px;font-size:6.8px;color:#4c4d53;">Suchen und</div>
<div class="rt" style="left:909.0px;width:120px;text-align:center;top:58.8px;font-size:6.8px;color:#4c4d53;">Auswählen&nbsp;&nbsp;</div>
<div class="abs" style="left:987.8px;top:63.4px;width:0;height:0;border-left:1.7px solid transparent;border-right:1.7px solid transparent;border-top:2.1px solid #6a6b72"></div>
<div class="rt" style="left:860.0px;width:120px;text-align:center;top:69.1px;font-size:6.6px;color:#8d8e95;">Bearbeiten</div>
<div class="gsep" style="left:994.7px;top:31px"></div>
<div class="abs" style="left:955.0px;top:0.0px;width:35.5px;height:7.4px;background:linear-gradient(#9c9da2,#7e7f85);border:.6px solid #6c6d73;border-top:none;border-radius:0 0 0 2px"></div>
<div class="abs" style="left:990.0px;top:0.0px;width:25.5px;height:7.4px;background:linear-gradient(#d98a7a,#c9513d 60%,#c64230);border:.6px solid #8e4034;border-top:none;border-radius:0 0 2px 0"></div>
<div class="abs" style="left:973.0px;top:0.0px;width:0.6px;height:7.4px;background:#6c6d73"></div>
<div class="abs" style="left:961.5px;top:4.0px;width:5.5px;height:1.4px;background:#f2f2f4"></div>
<svg class="abs" style="left:977.5px;top:0.8px" width="7" height="5.5" viewBox="0 0 7 5.5"><rect x="1.6" y=".5" width="4.4" height="3.4" fill="none" stroke="#f2f2f4" stroke-width=".9"/><rect x=".5" y="1.8" width="4.2" height="3.2" fill="#8e8f95" stroke="#f2f2f4" stroke-width=".9"/></svg>
<svg class="abs" style="left:1000.0px;top:1.0px" width="6" height="5.5" viewBox="0 0 6 5.5"><path d="M.6 .4l4.4 4.4M5 .4L.6 4.8" stroke="#fbf3f0" stroke-width="1.2"/></svg>
<svg class="abs" style="left:956.5px;top:16.5px" width="6" height="5" viewBox="0 0 6 5"><path d="M.6 4V2.4L2.6 .8l2 1.6V4z" fill="#e8e8ec" stroke="#9a9ba4" stroke-width=".6"/></svg>
<svg class="abs" style="left:967.3px;top:13.8px" width="11" height="11" viewBox="0 0 11 11"><circle cx="5.3" cy="5.3" r="4.9" fill="#3f70bb" stroke="#a9c3ea" stroke-width=".7"/><text x="5.3" y="7.9" font-size="7.4" font-weight="bold" text-anchor="middle" fill="#f4f7fc" font-family="Liberation Sans,sans-serif">?</text></svg>
<svg class="abs" style="left:982.5px;top:17.5px" width="7" height="4" viewBox="0 0 7 4"><rect x=".5" y=".5" width="5.8" height="2.6" rx=".8" fill="#ececf0" stroke="#9a9ba4" stroke-width=".6"/></svg>
<svg class="abs" style="left:994.5px;top:15.5px" width="9" height="8" viewBox="0 0 9 8"><rect x="2.6" y=".5" width="5" height="4" fill="#e4e4e8" stroke="#85868e" stroke-width=".7"/><rect x=".5" y="2.4" width="5" height="4" fill="#e4e4e8" stroke="#85868e" stroke-width=".7"/></svg>
<svg class="abs" style="left:1009.5px;top:16.5px" width="6" height="6" viewBox="0 0 6 6"><path d="M.6 .6l4 4M4.6 .6l-4 4" stroke="#7a7b84" stroke-width="1"/></svg>
<div id="fbar" class="abs"><div id="namebox" class="abs"></div><div id="fxarea" class="abs"></div><div id="finput" class="abs"></div>
<div class="abs" style="left:32px;top:2.6px;font-size:7.4px;line-height:9px;color:#2c2c31">AX99</div>
<div class="abs" style="left:87.2px;top:6.6px;width:0;height:0;border-left:2px solid transparent;border-right:2px solid transparent;border-top:2.4px solid #3c3d44"></div>
<svg class="abs" style="left:98px;top:2px" width="50" height="11" viewBox="0 0 50 11"><path d="M6.4 1.6c-2.6.6-2.6 6.4 0 7" fill="none" stroke="#eeeef2" stroke-width="1.6" opacity=".8"/><text x="39.4" y="8.4" font-size="8" font-style="italic" font-weight="bold" fill="#3a3b42" font-family="Liberation Serif,serif">f</text><text x="43" y="8.8" font-size="4.6" font-weight="bold" font-style="italic" fill="#3a3b42" font-family="Liberation Serif,serif">x</text></svg>
<svg class="abs" style="left:1008.5px;top:1px" width="8" height="13" viewBox="0 0 8 13"><rect x="0" y="0" width="7.5" height="12.5" fill="#d4d5da"/><path d="M1.6 5.4l2 2.6 2-2.6" fill="none" stroke="#5a5b62" stroke-width="1"/></svg>
</div>
<div id="sbar" class="abs" style="left:0;top:589px;width:1016px;height:7.5px;background:#d9dade">
<svg class="abs" style="left:0;top:0" width="40" height="8" viewBox="0 0 40 8"><g fill="#55565e"><path d="M6.4 1.6L4 3.6l2.4 2z"/><rect x="3" y="1.6" width=".7" height="4"/><path d="M15 1.6l-2.4 2 2.4 2z"/><path d="M22 1.6l2.4 2-2.4 2z"/><path d="M31 1.6l2.4 2-2.4 2z"/><rect x="33.7" y="1.6" width=".7" height="4"/></g></svg>
<div class="abs" style="left:83px;top:0;width:80px;height:8px;background:#ededf0;transform:skewX(-25deg);transform-origin:0 100%"></div>
<div class="abs" style="left:43.8px;top:0.4px;font-size:7.4px;line-height:9px;white-space:nowrap;color:#6a6b72;">Deckblatt</div>
<div class="abs" style="left:87.5px;top:0.4px;font-size:7.4px;line-height:9px;white-space:nowrap;font-weight:bold;color:#2c2c31;">Fehlersammelkarte</div>
<div class="abs" style="left:169.7px;top:0.4px;font-size:7.4px;line-height:9px;white-space:nowrap;color:#6a6b72;">Paretoauswertung</div>
<div class="abs" style="left:249.7px;top:0.4px;font-size:7.4px;line-height:9px;white-space:nowrap;color:#6a6b72;">Bsp. Fehlersammelkarte</div>
<div class="abs" style="left:346.4px;top:0.4px;font-size:7.4px;line-height:9px;white-space:nowrap;color:#6a6b72;">Bsp Paretoauswertung</div>
<div class="abs" style="left:441.9px;top:0.4px;font-size:7.4px;line-height:9px;white-space:nowrap;color:#6a6b72;">Aktionsprogramm</div>
<svg class="abs" style="left:0;top:0" width="1016" height="8" viewBox="0 0 1016 8"><g stroke="#a9aab2" stroke-width=".6" fill="none"><path d="M40 0v8M80 8l3-8M163 0l4 8M243 0l4 8M340 0l4 8M435 0l4 8M508 0l4 8"/></g><rect x="515" y="1.6" width="7" height="5" fill="#f1f1f4" stroke="#8c8d96" stroke-width=".5"/><path d="M513.6 1.2l1.4 1.4M515 1.2l-1.4 1.4M514.3 .6v2.6M513.3 1.9h2" stroke="#d8952c" stroke-width=".5"/><rect x="604.6" y="0" width="405" height="7.5" fill="#d7d8dc"/><rect x="605" y=".8" width="2.6" height="6" fill="#ededf0" stroke="#9a9ba4" stroke-width=".5"/><path d="M616.6 1.8l-2.6 2 2.6 2z" fill="#3c3d44"/><path d="M620.4 .6v6.4" stroke="#a9aab2" stroke-width=".5"/><rect x="986" y=".4" width="14" height="6.8" fill="#cdced4" stroke="#a2a3ac" stroke-width=".5"/><path d="M1000.6 1.6l2.8 2.2-2.8 2.2z" fill="#3c3d44"/><path d="M1006.4 .6v6.4M1008.4 1.4v5" stroke="#8c8d96" stroke-width=".6"/></svg>
</div>
<div class="abs" style="left:1009px;top:95px;width:7px;height:494px;background:#d8d3d8">
<svg class="abs" style="left:0;top:0" width="7" height="494" viewBox="0 0 7 494"><rect x=".4" y=".4" width="6" height="5.6" fill="#e6e6ea" stroke="#a6a7b0" stroke-width=".5"/><path d="M1.6 14.4L3.5 12l1.9 2.4z" fill="#55565e"/><path d="M.4 17.6h6" stroke="#b9b4ba" stroke-width=".5"/><path d="M1.6 484l1.9 2.4 1.9-2.4z" fill="#55565e"/></svg>
</div>
</div>
<svg id="sheet" class="abs" style="left:0;top:0" width="1020" height="600" viewBox="0 0 1020 600">
<rect x="10.00" y="104.00" width="1001.00" height="487.00" fill="#21a327" />
<rect x="10.00" y="104.00" width="630.50" height="450.50" fill="#e0dfe3" />
<rect x="2.00" y="96.50" width="1009.00" height="7.60" fill="#d2d3dc" />
<line x1="2.00" y1="96.90" x2="1011.00" y2="96.90" stroke="#a4a5b0" stroke-width="0.9" />
<line x1="2.00" y1="104.00" x2="1011.00" y2="104.00" stroke="#a2a3ac" stroke-width="0.5" />
<line x1="10.00" y1="98.00" x2="10.00" y2="104.00" stroke="#b4b5be" stroke-width="0.5" />
<text x="19.65" y="102.40" font-size="3.6" text-anchor="middle" fill="#4e4f58" font-family="Liberation Sans,sans-serif" font-weight="bold">A</text>
<line x1="29.30" y1="98.00" x2="29.30" y2="104.00" stroke="#b4b5be" stroke-width="0.5" />
<text x="38.95" y="102.40" font-size="3.6" text-anchor="middle" fill="#4e4f58" font-family="Liberation Sans,sans-serif" font-weight="bold">B</text>
<line x1="48.60" y1="98.00" x2="48.60" y2="104.00" stroke="#b4b5be" stroke-width="0.5" />
<text x="58.25" y="102.40" font-size="3.6" text-anchor="middle" fill="#4e4f58" font-family="Liberation Sans,sans-serif" font-weight="bold">C</text>
<line x1="67.90" y1="98.00" x2="67.90" y2="104.00" stroke="#b4b5be" stroke-width="0.5" />
<text x="77.50" y="102.40" font-size="3.6" text-anchor="middle" fill="#4e4f58" font-family="Liberation Sans,sans-serif" font-weight="bold">D</text>
<line x1="87.10" y1="98.00" x2="87.10" y2="104.00" stroke="#b4b5be" stroke-width="0.5" />
<text x="97.10" y="102.40" font-size="3.6" text-anchor="middle" fill="#4e4f58" font-family="Liberation Sans,sans-serif" font-weight="bold">E</text>
<line x1="107.10" y1="98.00" x2="107.10" y2="104.00" stroke="#b4b5be" stroke-width="0.5" />
<text x="117.10" y="102.40" font-size="3.6" text-anchor="middle" fill="#4e4f58" font-family="Liberation Sans,sans-serif" font-weight="bold">F</text>
<line x1="127.10" y1="98.00" x2="127.10" y2="104.00" stroke="#b4b5be" stroke-width="0.5" />
<text x="137.10" y="102.40" font-size="3.6" text-anchor="middle" fill="#4e4f58" font-family="Liberation Sans,sans-serif" font-weight="bold">G</text>
<line x1="147.10" y1="98.00" x2="147.10" y2="104.00" stroke="#b4b5be" stroke-width="0.5" />
<text x="157.10" y="102.40" font-size="3.6" text-anchor="middle" fill="#4e4f58" font-family="Liberation Sans,sans-serif" font-weight="bold">H</text>
<line x1="167.10" y1="98.00" x2="167.10" y2="104.00" stroke="#b4b5be" stroke-width="0.5" />
<text x="177.10" y="102.40" font-size="3.6" text-anchor="middle" fill="#4e4f58" font-family="Liberation Sans,sans-serif" font-weight="bold">I</text>
<line x1="187.10" y1="98.00" x2="187.10" y2="104.00" stroke="#b4b5be" stroke-width="0.5" />
<text x="197.10" y="102.40" font-size="3.6" text-anchor="middle" fill="#4e4f58" font-family="Liberation Sans,sans-serif" font-weight="bold">J</text>
<line x1="207.10" y1="98.00" x2="207.10" y2="104.00" stroke="#b4b5be" stroke-width="0.5" />
<text x="217.10" y="102.40" font-size="3.6" text-anchor="middle" fill="#4e4f58" font-family="Liberation Sans,sans-serif" font-weight="bold">K</text>
<line x1="227.10" y1="98.00" x2="227.10" y2="104.00" stroke="#b4b5be" stroke-width="0.5" />
<text x="237.10" y="102.40" font-size="3.6" text-anchor="middle" fill="#4e4f58" font-family="Liberation Sans,sans-serif" font-weight="bold">L</text>
<line x1="247.10" y1="98.00" x2="247.10" y2="104.00" stroke="#b4b5be" stroke-width="0.5" />
<text x="257.10" y="102.40" font-size="3.6" text-anchor="middle" fill="#4e4f58" font-family="Liberation Sans,sans-serif" font-weight="bold">M</text>
<line x1="267.10" y1="98.00" x2="267.10" y2="104.00" stroke="#b4b5be" stroke-width="0.5" />
<text x="277.10" y="102.40" font-size="3.6" text-anchor="middle" fill="#4e4f58" font-family="Liberation Sans,sans-serif" font-weight="bold">N</text>
<line x1="287.10" y1="98.00" x2="287.10" y2="104.00" stroke="#b4b5be" stroke-width="0.5" />
<text x="297.10" y="102.40" font-size="3.6" text-anchor="middle" fill="#4e4f58" font-family="Liberation Sans,sans-serif" font-weight="bold">O</text>
<line x1="307.10" y1="98.00" x2="307.10" y2="104.00" stroke="#b4b5be" stroke-width="0.5" />
<text x="317.10" y="102.40" font-size="3.6" text-anchor="middle" fill="#4e4f58" font-family="Liberation Sans,sans-serif" font-weight="bold">P</text>
<line x1="327.10" y1="98.00" x2="327.10" y2="104.00" stroke="#b4b5be" stroke-width="0.5" />
<text x="337.10" y="102.40" font-size="3.6" text-anchor="middle" fill="#4e4f58" font-family="Liberation Sans,sans-serif" font-weight="bold">Q</text>
<line x1="347.10" y1="98.00" x2="347.10" y2="104.00" stroke="#b4b5be" stroke-width="0.5" />
<text x="357.10" y="102.40" font-size="3.6" text-anchor="middle" fill="#4e4f58" font-family="Liberation Sans,sans-serif" font-weight="bold">R</text>
<line x1="367.10" y1="98.00" x2="367.10" y2="104.00" stroke="#b4b5be" stroke-width="0.5" />
<text x="377.10" y="102.40" font-size="3.6" text-anchor="middle" fill="#4e4f58" font-family="Liberation Sans,sans-serif" font-weight="bold">S</text>
<line x1="387.10" y1="98.00" x2="387.10" y2="104.00" stroke="#b4b5be" stroke-width="0.5" />
<text x="397.10" y="102.40" font-size="3.6" text-anchor="middle" fill="#4e4f58" font-family="Liberation Sans,sans-serif" font-weight="bold">T</text>
<line x1="407.10" y1="98.00" x2="407.10" y2="104.00" stroke="#b4b5be" stroke-width="0.5" />
<text x="417.10" y="102.40" font-size="3.6" text-anchor="middle" fill="#4e4f58" font-family="Liberation Sans,sans-serif" font-weight="bold">U</text>
<line x1="427.10" y1="98.00" x2="427.10" y2="104.00" stroke="#b4b5be" stroke-width="0.5" />
<text x="437.10" y="102.40" font-size="3.6" text-anchor="middle" fill="#4e4f58" font-family="Liberation Sans,sans-serif" font-weight="bold">V</text>
<line x1="447.10" y1="98.00" x2="447.10" y2="104.00" stroke="#b4b5be" stroke-width="0.5" />
<text x="457.10" y="102.40" font-size="3.6" text-anchor="middle" fill="#4e4f58" font-family="Liberation Sans,sans-serif" font-weight="bold">W</text>
<line x1="467.10" y1="98.00" x2="467.10" y2="104.00" stroke="#b4b5be" stroke-width="0.5" />
<text x="477.10" y="102.40" font-size="3.6" text-anchor="middle" fill="#4e4f58" font-family="Liberation Sans,sans-serif" font-weight="bold">X</text>
<line x1="487.10" y1="98.00" x2="487.10" y2="104.00" stroke="#b4b5be" stroke-width="0.5" />
<text x="497.80" y="102.40" font-size="3.6" text-anchor="middle" fill="#4e4f58" font-family="Liberation Sans,sans-serif" font-weight="bold">Y</text>
<line x1="508.50" y1="98.00" x2="508.50" y2="104.00" stroke="#b4b5be" stroke-width="0.5" />
<text x="520.90" y="102.40" font-size="3.6" text-anchor="middle" fill="#4e4f58" font-family="Liberation Sans,sans-serif" font-weight="bold">Z</text>
<line x1="533.30" y1="98.00" x2="533.30" y2="104.00" stroke="#b4b5be" stroke-width="0.5" />
<text x="546.65" y="102.40" font-size="3.6" text-anchor="middle" fill="#4e4f58" font-family="Liberation Sans,sans-serif" font-weight="bold">AA</text>
<line x1="560.00" y1="98.00" x2="560.00" y2="104.00" stroke="#b4b5be" stroke-width="0.5" />
<text x="573.50" y="102.40" font-size="3.6" text-anchor="middle" fill="#4e4f58" font-family="Liberation Sans,sans-serif" font-weight="bold">AB</text>
<line x1="587.00" y1="98.00" x2="587.00" y2="104.00" stroke="#b4b5be" stroke-width="0.5" />
<text x="600.75" y="102.40" font-size="3.6" text-anchor="middle" fill="#4e4f58" font-family="Liberation Sans,sans-serif" font-weight="bold">AC</text>
<line x1="614.50" y1="98.00" x2="614.50" y2="104.00" stroke="#b4b5be" stroke-width="0.5" />
<text x="627.45" y="102.40" font-size="3.6" text-anchor="middle" fill="#4e4f58" font-family="Liberation Sans,sans-serif" font-weight="bold">AD</text>
<line x1="640.40" y1="98.00" x2="640.40" y2="104.00" stroke="#b4b5be" stroke-width="0.5" />
<text x="650.40" y="102.40" font-size="3.6" text-anchor="middle" fill="#4e4f58" font-family="Liberation Sans,sans-serif" font-weight="bold">AE</text>
<line x1="660.40" y1="98.00" x2="660.40" y2="104.00" stroke="#b4b5be" stroke-width="0.5" />
<text x="670.12" y="102.40" font-size="3.6" text-anchor="middle" fill="#4e4f58" font-family="Liberation Sans,sans-serif" font-weight="bold">AF</text>
<line x1="679.85" y1="98.00" x2="679.85" y2="104.00" stroke="#b4b5be" stroke-width="0.5" />
<text x="689.58" y="102.40" font-size="3.6" text-anchor="middle" fill="#4e4f58" font-family="Liberation Sans,sans-serif" font-weight="bold">AG</text>
<line x1="699.30" y1="98.00" x2="699.30" y2="104.00" stroke="#b4b5be" stroke-width="0.5" />
<text x="709.03" y="102.40" font-size="3.6" text-anchor="middle" fill="#4e4f58" font-family="Liberation Sans,sans-serif" font-weight="bold">AH</text>
<line x1="718.75" y1="98.00" x2="718.75" y2="104.00" stroke="#b4b5be" stroke-width="0.5" />
<text x="728.48" y="102.40" font-size="3.6" text-anchor="middle" fill="#4e4f58" font-family="Liberation Sans,sans-serif" font-weight="bold">AI</text>
<line x1="738.20" y1="98.00" x2="738.20" y2="104.00" stroke="#b4b5be" stroke-width="0.5" />
<text x="747.93" y="102.40" font-size="3.6" text-anchor="middle" fill="#4e4f58" font-family="Liberation Sans,sans-serif" font-weight="bold">AJ</text>
<line x1="757.65" y1="98.00" x2="757.65" y2="104.00" stroke="#b4b5be" stroke-width="0.5" />
<text x="767.38" y="102.40" font-size="3.6" text-anchor="middle" fill="#4e4f58" font-family="Liberation Sans,sans-serif" font-weight="bold">AK</text>
<line x1="777.10" y1="98.00" x2="777.10" y2="104.00" stroke="#b4b5be" stroke-width="0.5" />
<text x="786.83" y="102.40" font-size="3.6" text-anchor="middle" fill="#4e4f58" font-family="Liberation Sans,sans-serif" font-weight="bold">AL</text>
<line x1="796.55" y1="98.00" x2="796.55" y2="104.00" stroke="#b4b5be" stroke-width="0.5" />
<text x="806.28" y="102.40" font-size="3.6" text-anchor="middle" fill="#4e4f58" font-family="Liberation Sans,sans-serif" font-weight="bold">AM</text>
<line x1="816.00" y1="98.00" x2="816.00" y2="104.00" stroke="#b4b5be" stroke-width="0.5" />
<text x="825.73" y="102.40" font-size="3.6" text-anchor="middle" fill="#4e4f58" font-family="Liberation Sans,sans-serif" font-weight="bold">AN</text>
<line x1="835.45" y1="98.00" x2="835.45" y2="104.00" stroke="#b4b5be" stroke-width="0.5" />
<text x="845.18" y="102.40" font-size="3.6" text-anchor="middle" fill="#4e4f58" font-family="Liberation Sans,sans-serif" font-weight="bold">AO</text>
<line x1="854.90" y1="98.00" x2="854.90" y2="104.00" stroke="#b4b5be" stroke-width="0.5" />
<text x="864.63" y="102.40" font-size="3.6" text-anchor="middle" fill="#4e4f58" font-family="Liberation Sans,sans-serif" font-weight="bold">AP</text>
<line x1="874.35" y1="98.00" x2="874.35" y2="104.00" stroke="#b4b5be" stroke-width="0.5" />
<text x="884.08" y="102.40" font-size="3.6" text-anchor="middle" fill="#4e4f58" font-family="Liberation Sans,sans-serif" font-weight="bold">AQ</text>
<line x1="893.80" y1="98.00" x2="893.80" y2="104.00" stroke="#b4b5be" stroke-width="0.5" />
<text x="903.53" y="102.40" font-size="3.6" text-anchor="middle" fill="#4e4f58" font-family="Liberation Sans,sans-serif" font-weight="bold">AR</text>
<line x1="913.25" y1="98.00" x2="913.25" y2="104.00" stroke="#b4b5be" stroke-width="0.5" />
<text x="922.98" y="102.40" font-size="3.6" text-anchor="middle" fill="#4e4f58" font-family="Liberation Sans,sans-serif" font-weight="bold">AS</text>
<line x1="932.70" y1="98.00" x2="932.70" y2="104.00" stroke="#b4b5be" stroke-width="0.5" />
<text x="942.43" y="102.40" font-size="3.6" text-anchor="middle" fill="#4e4f58" font-family="Liberation Sans,sans-serif" font-weight="bold">AT</text>
<line x1="952.15" y1="98.00" x2="952.15" y2="104.00" stroke="#b4b5be" stroke-width="0.5" />
<text x="961.88" y="102.40" font-size="3.6" text-anchor="middle" fill="#4e4f58" font-family="Liberation Sans,sans-serif" font-weight="bold">AU</text>
<line x1="971.60" y1="98.00" x2="971.60" y2="104.00" stroke="#b4b5be" stroke-width="0.5" />
<text x="981.33" y="102.40" font-size="3.6" text-anchor="middle" fill="#4e4f58" font-family="Liberation Sans,sans-serif" font-weight="bold">AV</text>
<line x1="991.05" y1="98.00" x2="991.05" y2="104.00" stroke="#b4b5be" stroke-width="0.5" />
<text x="1000.78" y="102.40" font-size="3.6" text-anchor="middle" fill="#4e4f58" font-family="Liberation Sans,sans-serif" font-weight="bold">AW</text>
<line x1="1010.50" y1="98.00" x2="1010.50" y2="104.00" stroke="#b4b5be" stroke-width="0.5" />
<text x="1020.23" y="102.40" font-size="3.6" text-anchor="middle" fill="#4e4f58" font-family="Liberation Sans,sans-serif" font-weight="bold">AX</text>
<rect x="2.00" y="104.00" width="8.20" height="487.00" fill="#d0d1db" />
<line x1="10.10" y1="97.00" x2="10.10" y2="591.00" stroke="#b0b1ba" stroke-width="0.5" />
<line x1="2.00" y1="117.50" x2="10.00" y2="117.50" stroke="#b9bac3" stroke-width="0.4" />
<text x="6.00" y="116.70" font-size="3.2" text-anchor="middle" fill="#50515c" font-family="Liberation Sans,sans-serif" font-weight="bold">1</text>
<line x1="2.00" y1="125.50" x2="10.00" y2="125.50" stroke="#b9bac3" stroke-width="0.4" />
<text x="6.00" y="124.70" font-size="3.2" text-anchor="middle" fill="#50515c" font-family="Liberation Sans,sans-serif" font-weight="bold">2</text>
<line x1="2.00" y1="133.50" x2="10.00" y2="133.50" stroke="#b9bac3" stroke-width="0.4" />
<text x="6.00" y="132.70" font-size="3.2" text-anchor="middle" fill="#50515c" font-family="Liberation Sans,sans-serif" font-weight="bold">3</text>
<line x1="2.00" y1="141.50" x2="10.00" y2="141.50" stroke="#b9bac3" stroke-width="0.4" />
<text x="6.00" y="140.70" font-size="3.2" text-anchor="middle" fill="#50515c" font-family="Liberation Sans,sans-serif" font-weight="bold">4</text>
<line x1="2.00" y1="149.70" x2="10.00" y2="149.70" stroke="#b9bac3" stroke-width="0.4" />
<text x="6.00" y="148.90" font-size="3.2" text-anchor="middle" fill="#50515c" font-family="Liberation Sans,sans-serif" font-weight="bold">5</text>
<line x1="2.00" y1="157.40" x2="10.00" y2="157.40" stroke="#b9bac3" stroke-width="0.4" />
<text x="6.00" y="156.60" font-size="3.2" text-anchor="middle" fill="#50515c" font-family="Liberation Sans,sans-serif" font-weight="bold">6</text>
<line x1="2.00" y1="165.00" x2="10.00" y2="165.00" stroke="#b9bac3" stroke-width="0.4" />
<text x="6.00" y="164.20" font-size="3.2" text-anchor="middle" fill="#50515c" font-family="Liberation Sans,sans-serif" font-weight="bold">7</text>
<line x1="2.00" y1="173.00" x2="10.00" y2="173.00" stroke="#b9bac3" stroke-width="0.4" />
<text x="6.00" y="172.20" font-size="3.2" text-anchor="middle" fill="#50515c" font-family="Liberation Sans,sans-serif" font-weight="bold">8</text>
<line x1="2.00" y1="181.00" x2="10.00" y2="181.00" stroke="#b9bac3" stroke-width="0.4" />
<text x="6.00" y="180.20" font-size="3.2" text-anchor="middle" fill="#50515c" font-family="Liberation Sans,sans-serif" font-weight="bold">9</text>
<line x1="2.00" y1="189.00" x2="10.00" y2="189.00" stroke="#b9bac3" stroke-width="0.4" />
<text x="6.00" y="188.20" font-size="3.2" text-anchor="middle" fill="#50515c" font-family="Liberation Sans,sans-serif" font-weight="bold">10</text>
<line x1="2.00" y1="196.90" x2="10.00" y2="196.90" stroke="#b9bac3" stroke-width="0.4" />
<text x="6.00" y="196.10" font-size="3.2" text-anchor="middle" fill="#50515c" font-family="Liberation Sans,sans-serif" font-weight="bold">11</text>
<line x1="2.00" y1="210.23" x2="10.00" y2="210.23" stroke="#b9bac3" stroke-width="0.4" />
<text x="6.00" y="209.43" font-size="3.2" text-anchor="middle" fill="#50515c" font-family="Liberation Sans,sans-serif" font-weight="bold">12</text>
<line x1="2.00" y1="223.56" x2="10.00" y2="223.56" stroke="#b9bac3" stroke-width="0.4" />
<text x="6.00" y="222.76" font-size="3.2" text-anchor="middle" fill="#50515c" font-family="Liberation Sans,sans-serif" font-weight="bold">13</text>
<line x1="2.00" y1="236.89" x2="10.00" y2="236.89" stroke="#b9bac3" stroke-width="0.4" />
<text x="6.00" y="236.09" font-size="3.2" text-anchor="middle" fill="#50515c" font-family="Liberation Sans,sans-serif" font-weight="bold">14</text>
<line x1="2.00" y1="250.22" x2="10.00" y2="250.22" stroke="#b9bac3" stroke-width="0.4" />
<text x="6.00" y="249.42" font-size="3.2" text-anchor="middle" fill="#50515c" font-family="Liberation Sans,sans-serif" font-weight="bold">15</text>
<line x1="2.00" y1="263.55" x2="10.00" y2="263.55" stroke="#b9bac3" stroke-width="0.4" />
<text x="6.00" y="262.75" font-size="3.2" text-anchor="middle" fill="#50515c" font-family="Liberation Sans,sans-serif" font-weight="bold">16</text>
<line x1="2.00" y1="276.88" x2="10.00" y2="276.88" stroke="#b9bac3" stroke-width="0.4" />
<text x="6.00" y="276.08" font-size="3.2" text-anchor="middle" fill="#50515c" font-family="Liberation Sans,sans-serif" font-weight="bold">17</text>
<line x1="2.00" y1="290.21" x2="10.00" y2="290.21" stroke="#b9bac3" stroke-width="0.4" />
<text x="6.00" y="289.41" font-size="3.2" text-anchor="middle" fill="#50515c" font-family="Liberation Sans,sans-serif" font-weight="bold">18</text>
<line x1="2.00" y1="303.54" x2="10.00" y2="303.54" stroke="#b9bac3" stroke-width="0.4" />
<text x="6.00" y="302.74" font-size="3.2" text-anchor="middle" fill="#50515c" font-family="Liberation Sans,sans-serif" font-weight="bold">19</text>
<line x1="2.00" y1="316.87" x2="10.00" y2="316.87" stroke="#b9bac3" stroke-width="0.4" />
<text x="6.00" y="316.07" font-size="3.2" text-anchor="middle" fill="#50515c" font-family="Liberation Sans,sans-serif" font-weight="bold">20</text>
<line x1="2.00" y1="330.20" x2="10.00" y2="330.20" stroke="#b9bac3" stroke-width="0.4" />
<text x="6.00" y="329.40" font-size="3.2" text-anchor="middle" fill="#50515c" font-family="Liberation Sans,sans-serif" font-weight="bold">21</text>
<line x1="2.00" y1="343.53" x2="10.00" y2="343.53" stroke="#b9bac3" stroke-width="0.4" />
<text x="6.00" y="342.73" font-size="3.2" text-anchor="middle" fill="#50515c" font-family="Liberation Sans,sans-serif" font-weight="bold">22</text>
<line x1="2.00" y1="356.86" x2="10.00" y2="356.86" stroke="#b9bac3" stroke-width="0.4" />
<text x="6.00" y="356.06" font-size="3.2" text-anchor="middle" fill="#50515c" font-family="Liberation Sans,sans-serif" font-weight="bold">23</text>
<line x1="2.00" y1="370.19" x2="10.00" y2="370.19" stroke="#b9bac3" stroke-width="0.4" />
<text x="6.00" y="369.39" font-size="3.2" text-anchor="middle" fill="#50515c" font-family="Liberation Sans,sans-serif" font-weight="bold">24</text>
<line x1="2.00" y1="383.00" x2="10.00" y2="383.00" stroke="#b9bac3" stroke-width="0.4" />
<text x="6.00" y="382.20" font-size="3.2" text-anchor="middle" fill="#50515c" font-family="Liberation Sans,sans-serif" font-weight="bold">25</text>
<line x1="2.00" y1="388.20" x2="10.00" y2="388.20" stroke="#b9bac3" stroke-width="0.4" />
<text x="6.00" y="387.40" font-size="3.2" text-anchor="middle" fill="#50515c" font-family="Liberation Sans,sans-serif" font-weight="bold">26</text>
<line x1="2.00" y1="393.40" x2="10.00" y2="393.40" stroke="#b9bac3" stroke-width="0.4" />
<text x="6.00" y="392.60" font-size="3.2" text-anchor="middle" fill="#50515c" font-family="Liberation Sans,sans-serif" font-weight="bold">27</text>
<line x1="2.00" y1="398.60" x2="10.00" y2="398.60" stroke="#b9bac3" stroke-width="0.4" />
<text x="6.00" y="397.80" font-size="3.2" text-anchor="middle" fill="#50515c" font-family="Liberation Sans,sans-serif" font-weight="bold">28</text>
<line x1="2.00" y1="403.80" x2="10.00" y2="403.80" stroke="#b9bac3" stroke-width="0.4" />
<text x="6.00" y="403.00" font-size="3.2" text-anchor="middle" fill="#50515c" font-family="Liberation Sans,sans-serif" font-weight="bold">29</text>
<line x1="2.00" y1="409.00" x2="10.00" y2="409.00" stroke="#b9bac3" stroke-width="0.4" />
<text x="6.00" y="408.20" font-size="3.2" text-anchor="middle" fill="#50515c" font-family="Liberation Sans,sans-serif" font-weight="bold">30</text>
<line x1="2.00" y1="414.20" x2="10.00" y2="414.20" stroke="#b9bac3" stroke-width="0.4" />
<text x="6.00" y="413.40" font-size="3.2" text-anchor="middle" fill="#50515c" font-family="Liberation Sans,sans-serif" font-weight="bold">31</text>
<line x1="2.00" y1="419.40" x2="10.00" y2="419.40" stroke="#b9bac3" stroke-width="0.4" />
<text x="6.00" y="418.60" font-size="3.2" text-anchor="middle" fill="#50515c" font-family="Liberation Sans,sans-serif" font-weight="bold">32</text>
<line x1="2.00" y1="424.60" x2="10.00" y2="424.60" stroke="#b9bac3" stroke-width="0.4" />
<text x="6.00" y="423.80" font-size="3.2" text-anchor="middle" fill="#50515c" font-family="Liberation Sans,sans-serif" font-weight="bold">33</text>
<line x1="2.00" y1="429.80" x2="10.00" y2="429.80" stroke="#b9bac3" stroke-width="0.4" />
<text x="6.00" y="429.00" font-size="3.2" text-anchor="middle" fill="#50515c" font-family="Liberation Sans,sans-serif" font-weight="bold">34</text>
<line x1="2.00" y1="435.00" x2="10.00" y2="435.00" stroke="#b9bac3" stroke-width="0.4" />
<text x="6.00" y="434.20" font-size="3.2" text-anchor="middle" fill="#50515c" font-family="Liberation Sans,sans-serif" font-weight="bold">35</text>
<line x1="2.00" y1="440.20" x2="10.00" y2="440.20" stroke="#b9bac3" stroke-width="0.4" />
<text x="6.00" y="439.40" font-size="3.2" text-anchor="middle" fill="#50515c" font-family="Liberation Sans,sans-serif" font-weight="bold">36</text>
<line x1="2.00" y1="445.40" x2="10.00" y2="445.40" stroke="#b9bac3" stroke-width="0.4" />
<text x="6.00" y="444.60" font-size="3.2" text-anchor="middle" fill="#50515c" font-family="Liberation Sans,sans-serif" font-weight="bold">37</text>
<line x1="2.00" y1="450.60" x2="10.00" y2="450.60" stroke="#b9bac3" stroke-width="0.4" />
<text x="6.00" y="449.80" font-size="3.2" text-anchor="middle" fill="#50515c" font-family="Liberation Sans,sans-serif" font-weight="bold">38</text>
<line x1="2.00" y1="455.80" x2="10.00" y2="455.80" stroke="#b9bac3" stroke-width="0.4" />
<text x="6.00" y="455.00" font-size="3.2" text-anchor="middle" fill="#50515c" font-family="Liberation Sans,sans-serif" font-weight="bold">39</text>
<line x1="2.00" y1="461.00" x2="10.00" y2="461.00" stroke="#b9bac3" stroke-width="0.4" />
<text x="6.00" y="460.20" font-size="3.2" text-anchor="middle" fill="#50515c" font-family="Liberation Sans,sans-serif" font-weight="bold">40</text>
<line x1="2.00" y1="466.20" x2="10.00" y2="466.20" stroke="#b9bac3" stroke-width="0.4" />
<text x="6.00" y="465.40" font-size="3.2" text-anchor="middle" fill="#50515c" font-family="Liberation Sans,sans-serif" font-weight="bold">41</text>
<line x1="2.00" y1="471.40" x2="10.00" y2="471.40" stroke="#b9bac3" stroke-width="0.4" />
<text x="6.00" y="470.60" font-size="3.2" text-anchor="middle" fill="#50515c" font-family="Liberation Sans,sans-serif" font-weight="bold">42</text>
<line x1="2.00" y1="476.60" x2="10.00" y2="476.60" stroke="#b9bac3" stroke-width="0.4" />
<text x="6.00" y="475.80" font-size="3.2" text-anchor="middle" fill="#50515c" font-family="Liberation Sans,sans-serif" font-weight="bold">43</text>
<line x1="2.00" y1="481.80" x2="10.00" y2="481.80" stroke="#b9bac3" stroke-width="0.4" />
<text x="6.00" y="481.00" font-size="3.2" text-anchor="middle" fill="#50515c" font-family="Liberation Sans,sans-serif" font-weight="bold">44</text>
<line x1="2.00" y1="487.00" x2="10.00" y2="487.00" stroke="#b9bac3" stroke-width="0.4" />
<text x="6.00" y="486.20" font-size="3.2" text-anchor="middle" fill="#50515c" font-family="Liberation Sans,sans-serif" font-weight="bold">45</text>
<line x1="2.00" y1="492.20" x2="10.00" y2="492.20" stroke="#b9bac3" stroke-width="0.4" />
<text x="6.00" y="491.40" font-size="3.2" text-anchor="middle" fill="#50515c" font-family="Liberation Sans,sans-serif" font-weight="bold">46</text>
<line x1="2.00" y1="497.40" x2="10.00" y2="497.40" stroke="#b9bac3" stroke-width="0.4" />
<text x="6.00" y="496.60" font-size="3.2" text-anchor="middle" fill="#50515c" font-family="Liberation Sans,sans-serif" font-weight="bold">47</text>
<line x1="2.00" y1="502.60" x2="10.00" y2="502.60" stroke="#b9bac3" stroke-width="0.4" />
<text x="6.00" y="501.80" font-size="3.2" text-anchor="middle" fill="#50515c" font-family="Liberation Sans,sans-serif" font-weight="bold">48</text>
<line x1="2.00" y1="507.80" x2="10.00" y2="507.80" stroke="#b9bac3" stroke-width="0.4" />
<text x="6.00" y="507.00" font-size="3.2" text-anchor="middle" fill="#50515c" font-family="Liberation Sans,sans-serif" font-weight="bold">49</text>
<line x1="2.00" y1="513.00" x2="10.00" y2="513.00" stroke="#b9bac3" stroke-width="0.4" />
<text x="6.00" y="512.20" font-size="3.2" text-anchor="middle" fill="#50515c" font-family="Liberation Sans,sans-serif" font-weight="bold">50</text>
<line x1="2.00" y1="518.20" x2="10.00" y2="518.20" stroke="#b9bac3" stroke-width="0.4" />
<text x="6.00" y="517.40" font-size="3.2" text-anchor="middle" fill="#50515c" font-family="Liberation Sans,sans-serif" font-weight="bold">51</text>
<line x1="2.00" y1="523.40" x2="10.00" y2="523.40" stroke="#b9bac3" stroke-width="0.4" />
<text x="6.00" y="522.60" font-size="3.2" text-anchor="middle" fill="#50515c" font-family="Liberation Sans,sans-serif" font-weight="bold">52</text>
<line x1="2.00" y1="528.60" x2="10.00" y2="528.60" stroke="#b9bac3" stroke-width="0.4" />
<text x="6.00" y="527.80" font-size="3.2" text-anchor="middle" fill="#50515c" font-family="Liberation Sans,sans-serif" font-weight="bold">53</text>
<line x1="2.00" y1="533.80" x2="10.00" y2="533.80" stroke="#b9bac3" stroke-width="0.4" />
<text x="6.00" y="533.00" font-size="3.2" text-anchor="middle" fill="#50515c" font-family="Liberation Sans,sans-serif" font-weight="bold">54</text>
<line x1="2.00" y1="539.00" x2="10.00" y2="539.00" stroke="#b9bac3" stroke-width="0.4" />
<text x="6.00" y="538.20" font-size="3.2" text-anchor="middle" fill="#50515c" font-family="Liberation Sans,sans-serif" font-weight="bold">55</text>
<line x1="2.00" y1="544.20" x2="10.00" y2="544.20" stroke="#b9bac3" stroke-width="0.4" />
<text x="6.00" y="543.40" font-size="3.2" text-anchor="middle" fill="#50515c" font-family="Liberation Sans,sans-serif" font-weight="bold">56</text>
<line x1="2.00" y1="549.40" x2="10.00" y2="549.40" stroke="#b9bac3" stroke-width="0.4" />
<text x="6.00" y="548.60" font-size="3.2" text-anchor="middle" fill="#50515c" font-family="Liberation Sans,sans-serif" font-weight="bold">57</text>
<line x1="2.00" y1="554.60" x2="10.00" y2="554.60" stroke="#b9bac3" stroke-width="0.4" />
<text x="6.00" y="553.80" font-size="3.2" text-anchor="middle" fill="#50515c" font-family="Liberation Sans,sans-serif" font-weight="bold">58</text>
<line x1="2.00" y1="559.80" x2="10.00" y2="559.80" stroke="#b9bac3" stroke-width="0.4" />
<text x="6.00" y="559.00" font-size="3.2" text-anchor="middle" fill="#50515c" font-family="Liberation Sans,sans-serif" font-weight="bold">59</text>
<line x1="2.00" y1="565.00" x2="10.00" y2="565.00" stroke="#b9bac3" stroke-width="0.4" />
<text x="6.00" y="564.20" font-size="3.2" text-anchor="middle" fill="#50515c" font-family="Liberation Sans,sans-serif" font-weight="bold">60</text>
<line x1="2.00" y1="570.20" x2="10.00" y2="570.20" stroke="#b9bac3" stroke-width="0.4" />
<text x="6.00" y="569.40" font-size="3.2" text-anchor="middle" fill="#50515c" font-family="Liberation Sans,sans-serif" font-weight="bold">61</text>
<line x1="2.00" y1="575.40" x2="10.00" y2="575.40" stroke="#b9bac3" stroke-width="0.4" />
<text x="6.00" y="574.60" font-size="3.2" text-anchor="middle" fill="#50515c" font-family="Liberation Sans,sans-serif" font-weight="bold">62</text>
<line x1="2.00" y1="580.60" x2="10.00" y2="580.60" stroke="#b9bac3" stroke-width="0.4" />
<text x="6.00" y="579.80" font-size="3.2" text-anchor="middle" fill="#50515c" font-family="Liberation Sans,sans-serif" font-weight="bold">63</text>
<line x1="2.00" y1="585.80" x2="10.00" y2="585.80" stroke="#b9bac3" stroke-width="0.4" />
<text x="6.00" y="585.00" font-size="3.2" text-anchor="middle" fill="#50515c" font-family="Liberation Sans,sans-serif" font-weight="bold">64</text>
<rect x="10.40" y="104.40" width="629.60" height="12.60" fill="#a4c678" />
<text x="325.50" y="113.80" font-size="8.3" text-anchor="middle" fill="#1e2a1a" font-family="Liberation Sans,sans-serif" font-weight="bold">Fehlersammelkarte</text>
<line x1="10.40" y1="125.50" x2="288.00" y2="125.50" stroke="#1c1c1e" stroke-width="0.55" />
<line x1="308.00" y1="125.50" x2="640.00" y2="125.50" stroke="#1c1c1e" stroke-width="0.55" />
<line x1="10.40" y1="133.50" x2="288.00" y2="133.50" stroke="#1c1c1e" stroke-width="0.55" />
<line x1="308.00" y1="133.50" x2="640.00" y2="133.50" stroke="#1c1c1e" stroke-width="0.55" />
<line x1="10.40" y1="141.50" x2="288.00" y2="141.50" stroke="#1c1c1e" stroke-width="0.55" />
<line x1="308.00" y1="141.50" x2="640.00" y2="141.50" stroke="#1c1c1e" stroke-width="0.55" />
<text x="11.60" y="123.70" font-size="6.3" text-anchor="start" fill="#141416" font-family="Liberation Sans,sans-serif" >Baugruppe/Modell</text>
<text x="11.60" y="131.70" font-size="6.3" text-anchor="start" fill="#141416" font-family="Liberation Sans,sans-serif" >Bauteilbezeichnung</text>
<text x="11.60" y="139.70" font-size="6.3" text-anchor="start" fill="#141416" font-family="Liberation Sans,sans-serif" >Bauteilenummer</text>
<text x="11.60" y="147.70" font-size="6.3" text-anchor="start" fill="#141416" font-family="Liberation Sans,sans-serif" >Prüfzeitraum (von/bis)</text>
<text x="309.60" y="123.70" font-size="6.3" text-anchor="start" fill="#141416" font-family="Liberation Sans,sans-serif" >Datum</text>
<text x="309.60" y="131.70" font-size="6.3" text-anchor="start" fill="#141416" font-family="Liberation Sans,sans-serif" >Werk</text>
<text x="309.60" y="139.70" font-size="6.3" text-anchor="start" fill="#141416" font-family="Liberation Sans,sans-serif" >Bereich</text>
<text x="309.60" y="147.70" font-size="6.3" text-anchor="start" fill="#141416" font-family="Liberation Sans,sans-serif" >Abteilung</text>
<line x1="10.40" y1="117.40" x2="640.00" y2="117.40" stroke="#1c1c1e" stroke-width="1.4" />
<line x1="10.40" y1="149.80" x2="640.00" y2="149.80" stroke="#1c1c1e" stroke-width="1.3" />
<line x1="87.10" y1="117.50" x2="87.10" y2="149.80" stroke="#1c1c1e" stroke-width="0.9" />
<line x1="288.00" y1="117.50" x2="288.00" y2="149.80" stroke="#1c1c1e" stroke-width="1.8" />
<line x1="308.00" y1="117.50" x2="308.00" y2="149.80" stroke="#1c1c1e" stroke-width="1.8" />
<line x1="388.00" y1="117.50" x2="388.00" y2="149.80" stroke="#1c1c1e" stroke-width="0.7" />
<line x1="10.60" y1="104.50" x2="10.60" y2="150.00" stroke="#1c1c1e" stroke-width="1" />
<line x1="10.40" y1="157.20" x2="489.30" y2="157.20" stroke="#1c1c1e" stroke-width="1.6" />
<line x1="10.40" y1="188.50" x2="489.30" y2="188.50" stroke="#1c1c1e" stroke-width="1.7" />
<line x1="10.40" y1="165.00" x2="487.10" y2="165.00" stroke="#1e1e20" stroke-width="0.7" stroke-dasharray="1 .8"/>
<line x1="10.40" y1="173.00" x2="487.10" y2="173.00" stroke="#1e1e20" stroke-width="0.7" stroke-dasharray="1 .8"/>
<line x1="10.40" y1="181.00" x2="487.10" y2="181.00" stroke="#1e1e20" stroke-width="0.7" stroke-dasharray="1 .8"/>
<text x="85.60" y="163.60" font-size="6.3" text-anchor="end" fill="#141416" font-family="Liberation Sans,sans-serif" >Prüfung Nr.:</text>
<text x="85.60" y="171.50" font-size="6.3" text-anchor="end" fill="#141416" font-family="Liberation Sans,sans-serif" >Prüfdatum:</text>
<text x="85.60" y="179.40" font-size="6.3" text-anchor="end" fill="#141416" font-family="Liberation Sans,sans-serif" >Prüfzeitpunkt:</text>
<text x="85.60" y="187.30" font-size="6.3" text-anchor="end" fill="#141416" font-family="Liberation Sans,sans-serif" >Prüfer:</text>
<line x1="10.60" y1="157.50" x2="10.60" y2="197.00" stroke="#1c1c1e" stroke-width="1" />
<line x1="87.10" y1="157.50" x2="87.10" y2="383.00" stroke="#1c1c1e" stroke-width="1.3" />
<line x1="107.10" y1="157.50" x2="107.10" y2="189.00" stroke="#1c1c1e" stroke-width="0.7" />
<line x1="127.10" y1="157.50" x2="127.10" y2="189.00" stroke="#1c1c1e" stroke-width="0.7" />
<line x1="147.10" y1="157.50" x2="147.10" y2="189.00" stroke="#1c1c1e" stroke-width="0.7" />
<line x1="167.10" y1="157.50" x2="167.10" y2="189.00" stroke="#1c1c1e" stroke-width="0.7" />
<line x1="187.10" y1="157.50" x2="187.10" y2="189.00" stroke="#1c1c1e" stroke-width="0.7" />
<line x1="207.10" y1="157.50" x2="207.10" y2="189.00" stroke="#1c1c1e" stroke-width="0.7" />
<line x1="227.10" y1="157.50" x2="227.10" y2="189.00" stroke="#1c1c1e" stroke-width="0.7" />
<line x1="247.10" y1="157.50" x2="247.10" y2="189.00" stroke="#1c1c1e" stroke-width="0.7" />
<line x1="267.10" y1="157.50" x2="267.10" y2="189.00" stroke="#1c1c1e" stroke-width="0.7" />
<line x1="287.10" y1="157.50" x2="287.10" y2="189.00" stroke="#1c1c1e" stroke-width="0.7" />
<line x1="307.10" y1="157.50" x2="307.10" y2="189.00" stroke="#1c1c1e" stroke-width="0.7" />
<line x1="327.10" y1="157.50" x2="327.10" y2="189.00" stroke="#1c1c1e" stroke-width="0.7" />
<line x1="347.10" y1="157.50" x2="347.10" y2="189.00" stroke="#1c1c1e" stroke-width="0.7" />
<line x1="367.10" y1="157.50" x2="367.10" y2="189.00" stroke="#1c1c1e" stroke-width="0.7" />
<line x1="387.10" y1="157.50" x2="387.10" y2="189.00" stroke="#1c1c1e" stroke-width="0.7" />
<line x1="407.10" y1="157.50" x2="407.10" y2="189.00" stroke="#1c1c1e" stroke-width="0.7" />
<line x1="427.10" y1="157.50" x2="427.10" y2="189.00" stroke="#1c1c1e" stroke-width="0.7" />
<line x1="447.10" y1="157.50" x2="447.10" y2="189.00" stroke="#1c1c1e" stroke-width="0.7" />
<line x1="467.10" y1="157.50" x2="467.10" y2="189.00" stroke="#1c1c1e" stroke-width="0.7" />
<line x1="488.30" y1="156.60" x2="488.30" y2="189.30" stroke="#1c1c1e" stroke-width="2" />
<text x="97.10" y="162.50" font-size="3.6" text-anchor="middle" fill="#2a2a2e" font-family="Liberation Sans,sans-serif" font-weight="bold">1</text>
<text x="117.10" y="162.50" font-size="3.6" text-anchor="middle" fill="#2a2a2e" font-family="Liberation Sans,sans-serif" font-weight="bold">2</text>
<text x="137.10" y="162.50" font-size="3.6" text-anchor="middle" fill="#2a2a2e" font-family="Liberation Sans,sans-serif" font-weight="bold">3</text>
<text x="157.10" y="162.50" font-size="3.6" text-anchor="middle" fill="#2a2a2e" font-family="Liberation Sans,sans-serif" font-weight="bold">4</text>
<text x="177.10" y="162.50" font-size="3.6" text-anchor="middle" fill="#2a2a2e" font-family="Liberation Sans,sans-serif" font-weight="bold">5</text>
<text x="197.10" y="162.50" font-size="3.6" text-anchor="middle" fill="#2a2a2e" font-family="Liberation Sans,sans-serif" font-weight="bold">6</text>
<text x="217.10" y="162.50" font-size="3.6" text-anchor="middle" fill="#2a2a2e" font-family="Liberation Sans,sans-serif" font-weight="bold">7</text>
<text x="237.10" y="162.50" font-size="3.6" text-anchor="middle" fill="#2a2a2e" font-family="Liberation Sans,sans-serif" font-weight="bold">8</text>
<text x="257.10" y="162.50" font-size="3.6" text-anchor="middle" fill="#2a2a2e" font-family="Liberation Sans,sans-serif" font-weight="bold">9</text>
<text x="277.10" y="162.50" font-size="3.6" text-anchor="middle" fill="#2a2a2e" font-family="Liberation Sans,sans-serif" font-weight="bold">10</text>
<text x="297.10" y="162.50" font-size="3.6" text-anchor="middle" fill="#2a2a2e" font-family="Liberation Sans,sans-serif" font-weight="bold">11</text>
<text x="317.10" y="162.50" font-size="3.6" text-anchor="middle" fill="#2a2a2e" font-family="Liberation Sans,sans-serif" font-weight="bold">12</text>
<text x="337.10" y="162.50" font-size="3.6" text-anchor="middle" fill="#2a2a2e" font-family="Liberation Sans,sans-serif" font-weight="bold">13</text>
<text x="357.10" y="162.50" font-size="3.6" text-anchor="middle" fill="#2a2a2e" font-family="Liberation Sans,sans-serif" font-weight="bold">14</text>
<text x="377.10" y="162.50" font-size="3.6" text-anchor="middle" fill="#2a2a2e" font-family="Liberation Sans,sans-serif" font-weight="bold">15</text>
<text x="397.10" y="162.50" font-size="3.6" text-anchor="middle" fill="#2a2a2e" font-family="Liberation Sans,sans-serif" font-weight="bold">16</text>
<text x="417.10" y="162.50" font-size="3.6" text-anchor="middle" fill="#2a2a2e" font-family="Liberation Sans,sans-serif" font-weight="bold">17</text>
<text x="437.10" y="162.50" font-size="3.6" text-anchor="middle" fill="#2a2a2e" font-family="Liberation Sans,sans-serif" font-weight="bold">18</text>
<text x="457.10" y="162.50" font-size="3.6" text-anchor="middle" fill="#2a2a2e" font-family="Liberation Sans,sans-serif" font-weight="bold">19</text>
<text x="477.10" y="162.50" font-size="3.6" text-anchor="middle" fill="#2a2a2e" font-family="Liberation Sans,sans-serif" font-weight="bold">20</text>
<text x="11.60" y="195.40" font-size="6.3" text-anchor="start" fill="#141416" font-family="Liberation Sans,sans-serif" >Fehlerart</text>
<text x="287.00" y="195.20" font-size="6.3" text-anchor="middle" fill="#141416" font-family="Liberation Sans,sans-serif" >Fehlerhäufigkeit</text>
<line x1="10.40" y1="196.90" x2="489.10" y2="196.90" stroke="#1c1c1e" stroke-width="1.6" />
<line x1="487.10" y1="188.90" x2="533.50" y2="188.90" stroke="#55565a" stroke-width="0.6" />
<line x1="508.00" y1="188.90" x2="508.00" y2="197.00" stroke="#55565a" stroke-width="0.6" />
<line x1="533.50" y1="188.90" x2="533.50" y2="197.00" stroke="#55565a" stroke-width="0.6" />
<text x="497.55" y="195.20" font-size="5.2" text-anchor="middle" fill="#141416" font-family="Liberation Sans,sans-serif" >Σ=</text>
<text x="520.75" y="195.20" font-size="5.2" text-anchor="middle" fill="#141416" font-family="Liberation Sans,sans-serif" >%</text>
<rect x="10.40" y="197.00" width="476.70" height="173.19" fill="#afadb0" />
<line x1="10.40" y1="210.23" x2="533.50" y2="210.23" stroke="#1c1c1e" stroke-width="0.7" />
<line x1="10.40" y1="223.56" x2="533.50" y2="223.56" stroke="#1c1c1e" stroke-width="0.7" />
<line x1="10.40" y1="236.89" x2="533.50" y2="236.89" stroke="#1c1c1e" stroke-width="0.7" />
<line x1="10.40" y1="250.22" x2="533.50" y2="250.22" stroke="#1c1c1e" stroke-width="0.7" />
<line x1="10.40" y1="263.55" x2="533.50" y2="263.55" stroke="#1c1c1e" stroke-width="0.7" />
<line x1="10.40" y1="276.88" x2="533.50" y2="276.88" stroke="#1c1c1e" stroke-width="0.7" />
<line x1="10.40" y1="290.21" x2="533.50" y2="290.21" stroke="#1c1c1e" stroke-width="0.7" />
<line x1="10.40" y1="303.54" x2="533.50" y2="303.54" stroke="#1c1c1e" stroke-width="0.7" />
<line x1="10.40" y1="316.87" x2="533.50" y2="316.87" stroke="#1c1c1e" stroke-width="0.7" />
<line x1="10.40" y1="330.20" x2="533.50" y2="330.20" stroke="#1c1c1e" stroke-width="0.7" />
<line x1="10.40" y1="343.53" x2="533.50" y2="343.53" stroke="#1c1c1e" stroke-width="0.7" />
<line x1="10.40" y1="356.86" x2="533.50" y2="356.86" stroke="#1c1c1e" stroke-width="0.7" />
<line x1="107.10" y1="197.00" x2="107.10" y2="383.00" stroke="#1c1c1e" stroke-width="0.7" />
<line x1="127.10" y1="197.00" x2="127.10" y2="383.00" stroke="#1c1c1e" stroke-width="0.7" />
<line x1="147.10" y1="197.00" x2="147.10" y2="383.00" stroke="#1c1c1e" stroke-width="0.7" />
<line x1="167.10" y1="197.00" x2="167.10" y2="383.00" stroke="#1c1c1e" stroke-width="0.7" />
<line x1="187.10" y1="197.00" x2="187.10" y2="383.00" stroke="#1c1c1e" stroke-width="0.7" />
<line x1="207.10" y1="197.00" x2="207.10" y2="383.00" stroke="#1c1c1e" stroke-width="0.7" />
<line x1="227.10" y1="197.00" x2="227.10" y2="383.00" stroke="#1c1c1e" stroke-width="0.7" />
<line x1="247.10" y1="197.00" x2="247.10" y2="383.00" stroke="#1c1c1e" stroke-width="0.7" />
<line x1="267.10" y1="197.00" x2="267.10" y2="383.00" stroke="#1c1c1e" stroke-width="0.7" />
<line x1="287.10" y1="197.00" x2="287.10" y2="383.00" stroke="#1c1c1e" stroke-width="0.7" />
<line x1="307.10" y1="197.00" x2="307.10" y2="383.00" stroke="#1c1c1e" stroke-width="0.7" />
<line x1="327.10" y1="197.00" x2="327.10" y2="383.00" stroke="#1c1c1e" stroke-width="0.7" />
<line x1="347.10" y1="197.00" x2="347.10" y2="383.00" stroke="#1c1c1e" stroke-width="0.7" />
<line x1="367.10" y1="197.00" x2="367.10" y2="383.00" stroke="#1c1c1e" stroke-width="0.7" />
<line x1="387.10" y1="197.00" x2="387.10" y2="383.00" stroke="#1c1c1e" stroke-width="0.7" />
<line x1="407.10" y1="197.00" x2="407.10" y2="383.00" stroke="#1c1c1e" stroke-width="0.7" />
<line x1="427.10" y1="197.00" x2="427.10" y2="383.00" stroke="#1c1c1e" stroke-width="0.7" />
<line x1="447.10" y1="197.00" x2="447.10" y2="383.00" stroke="#1c1c1e" stroke-width="0.7" />
<line x1="467.10" y1="197.00" x2="467.10" y2="383.00" stroke="#1c1c1e" stroke-width="0.7" />
<line x1="10.60" y1="197.00" x2="10.60" y2="383.00" stroke="#1c1c1e" stroke-width="0.8" />
<line x1="87.10" y1="196.50" x2="87.10" y2="383.50" stroke="#1c1c1e" stroke-width="1.6" />
<line x1="488.30" y1="196.30" x2="488.30" y2="383.60" stroke="#1c1c1e" stroke-width="2" />
<line x1="508.00" y1="197.00" x2="508.00" y2="383.00" stroke="#1c1c1e" stroke-width="1.6" />
<line x1="533.50" y1="197.00" x2="533.50" y2="383.60" stroke="#1c1c1e" stroke-width="1.6" />
<line x1="487.10" y1="197.20" x2="533.50" y2="197.20" stroke="#1c1c1e" stroke-width="1.2" />
<text x="497.95" y="205.87" font-size="6.3" text-anchor="middle" fill="#3a3a3e" font-family="Liberation Sans,sans-serif" >0</text>
<text x="511.40" y="205.66" font-size="5.5" text-anchor="start" fill="#141416" font-family="Liberation Sans,sans-serif" font-weight="bold">#DIV/0!</text>
<path d="M508.8 197.5h3.2l-3.2 3.2z" fill="#1f6e2c"/>
<text x="497.95" y="219.20" font-size="6.3" text-anchor="middle" fill="#3a3a3e" font-family="Liberation Sans,sans-serif" >0</text>
<text x="511.40" y="219.00" font-size="5.5" text-anchor="start" fill="#141416" font-family="Liberation Sans,sans-serif" font-weight="bold">#DIV/0!</text>
<path d="M508.8 210.8h3.2l-3.2 3.2z" fill="#1f6e2c"/>
<text x="497.95" y="232.53" font-size="6.3" text-anchor="middle" fill="#3a3a3e" font-family="Liberation Sans,sans-serif" >0</text>
<text x="511.40" y="232.33" font-size="5.5" text-anchor="start" fill="#141416" font-family="Liberation Sans,sans-serif" font-weight="bold">#DIV/0!</text>
<path d="M508.8 224.2h3.2l-3.2 3.2z" fill="#1f6e2c"/>
<text x="497.95" y="245.86" font-size="6.3" text-anchor="middle" fill="#3a3a3e" font-family="Liberation Sans,sans-serif" >0</text>
<text x="511.40" y="245.66" font-size="5.5" text-anchor="start" fill="#141416" font-family="Liberation Sans,sans-serif" font-weight="bold">#DIV/0!</text>
<path d="M508.8 237.5h3.2l-3.2 3.2z" fill="#1f6e2c"/>
<text x="497.95" y="259.19" font-size="6.3" text-anchor="middle" fill="#3a3a3e" font-family="Liberation Sans,sans-serif" >0</text>
<text x="511.40" y="258.99" font-size="5.5" text-anchor="start" fill="#141416" font-family="Liberation Sans,sans-serif" font-weight="bold">#DIV/0!</text>
<path d="M508.8 250.8h3.2l-3.2 3.2z" fill="#1f6e2c"/>
<text x="497.95" y="272.52" font-size="6.3" text-anchor="middle" fill="#3a3a3e" font-family="Liberation Sans,sans-serif" >0</text>
<text x="511.40" y="272.32" font-size="5.5" text-anchor="start" fill="#141416" font-family="Liberation Sans,sans-serif" font-weight="bold">#DIV/0!</text>
<path d="M508.8 264.2h3.2l-3.2 3.2z" fill="#1f6e2c"/>
<text x="497.95" y="285.85" font-size="6.3" text-anchor="middle" fill="#3a3a3e" font-family="Liberation Sans,sans-serif" >0</text>
<text x="511.40" y="285.65" font-size="5.5" text-anchor="start" fill="#141416" font-family="Liberation Sans,sans-serif" font-weight="bold">#DIV/0!</text>
<path d="M508.8 277.5h3.2l-3.2 3.2z" fill="#1f6e2c"/>
<text x="497.95" y="299.18" font-size="6.3" text-anchor="middle" fill="#3a3a3e" font-family="Liberation Sans,sans-serif" >0</text>
<text x="511.40" y="298.98" font-size="5.5" text-anchor="start" fill="#141416" font-family="Liberation Sans,sans-serif" font-weight="bold">#DIV/0!</text>
<path d="M508.8 290.8h3.2l-3.2 3.2z" fill="#1f6e2c"/>
<text x="497.95" y="312.51" font-size="6.3" text-anchor="middle" fill="#3a3a3e" font-family="Liberation Sans,sans-serif" >0</text>
<text x="511.40" y="312.31" font-size="5.5" text-anchor="start" fill="#141416" font-family="Liberation Sans,sans-serif" font-weight="bold">#DIV/0!</text>
<path d="M508.8 304.1h3.2l-3.2 3.2z" fill="#1f6e2c"/>
<text x="497.95" y="325.84" font-size="6.3" text-anchor="middle" fill="#3a3a3e" font-family="Liberation Sans,sans-serif" >0</text>
<text x="511.40" y="325.64" font-size="5.5" text-anchor="start" fill="#141416" font-family="Liberation Sans,sans-serif" font-weight="bold">#DIV/0!</text>
<path d="M508.8 317.5h3.2l-3.2 3.2z" fill="#1f6e2c"/>
<text x="497.95" y="339.17" font-size="6.3" text-anchor="middle" fill="#3a3a3e" font-family="Liberation Sans,sans-serif" >0</text>
<text x="511.40" y="338.97" font-size="5.5" text-anchor="start" fill="#141416" font-family="Liberation Sans,sans-serif" font-weight="bold">#DIV/0!</text>
<path d="M508.8 330.8h3.2l-3.2 3.2z" fill="#1f6e2c"/>
<text x="497.95" y="352.50" font-size="6.3" text-anchor="middle" fill="#3a3a3e" font-family="Liberation Sans,sans-serif" >0</text>
<text x="511.40" y="352.30" font-size="5.5" text-anchor="start" fill="#141416" font-family="Liberation Sans,sans-serif" font-weight="bold">#DIV/0!</text>
<path d="M508.8 344.1h3.2l-3.2 3.2z" fill="#1f6e2c"/>
<text x="497.95" y="365.82" font-size="6.3" text-anchor="middle" fill="#3a3a3e" font-family="Liberation Sans,sans-serif" >0</text>
<text x="511.40" y="365.62" font-size="5.5" text-anchor="start" fill="#141416" font-family="Liberation Sans,sans-serif" font-weight="bold">#DIV/0!</text>
<path d="M508.8 357.5h3.2l-3.2 3.2z" fill="#1f6e2c"/>
<line x1="10.40" y1="370.59" x2="533.50" y2="370.59" stroke="#1c1c1e" stroke-width="1.5" />
<line x1="10.40" y1="383.00" x2="534.10" y2="383.00" stroke="#1c1c1e" stroke-width="1.6" />
<text x="48.50" y="378.90" font-size="5.5" text-anchor="middle" fill="#1e1e22" font-family="Liberation Sans,sans-serif" ><tspan text-decoration="underline">Σ</tspan> Fehlerhäufigkeit</text>
<text x="97.10" y="379.20" font-size="6.3" text-anchor="middle" fill="#3a3a3e" font-family="Liberation Sans,sans-serif" >0</text>
<text x="117.10" y="379.20" font-size="6.3" text-anchor="middle" fill="#3a3a3e" font-family="Liberation Sans,sans-serif" >0</text>
<text x="137.10" y="379.20" font-size="6.3" text-anchor="middle" fill="#3a3a3e" font-family="Liberation Sans,sans-serif" >0</text>
<text x="157.10" y="379.20" font-size="6.3" text-anchor="middle" fill="#3a3a3e" font-family="Liberation Sans,sans-serif" >0</text>
<text x="177.10" y="379.20" font-size="6.3" text-anchor="middle" fill="#3a3a3e" font-family="Liberation Sans,sans-serif" >0</text>
<text x="197.10" y="379.20" font-size="6.3" text-anchor="middle" fill="#3a3a3e" font-family="Liberation Sans,sans-serif" >0</text>
<text x="217.10" y="379.20" font-size="6.3" text-anchor="middle" fill="#3a3a3e" font-family="Liberation Sans,sans-serif" >0</text>
<text x="237.10" y="379.20" font-size="6.3" text-anchor="middle" fill="#3a3a3e" font-family="Liberation Sans,sans-serif" >0</text>
<text x="257.10" y="379.20" font-size="6.3" text-anchor="middle" fill="#3a3a3e" font-family="Liberation Sans,sans-serif" >0</text>
<text x="277.10" y="379.20" font-size="6.3" text-anchor="middle" fill="#3a3a3e" font-family="Liberation Sans,sans-serif" >0</text>
<text x="297.10" y="379.20" font-size="6.3" text-anchor="middle" fill="#3a3a3e" font-family="Liberation Sans,sans-serif" >0</text>
<text x="317.10" y="379.20" font-size="6.3" text-anchor="middle" fill="#3a3a3e" font-family="Liberation Sans,sans-serif" >0</text>
<text x="337.10" y="379.20" font-size="6.3" text-anchor="middle" fill="#3a3a3e" font-family="Liberation Sans,sans-serif" >0</text>
<text x="357.10" y="379.20" font-size="6.3" text-anchor="middle" fill="#3a3a3e" font-family="Liberation Sans,sans-serif" >0</text>
<text x="377.10" y="379.20" font-size="6.3" text-anchor="middle" fill="#3a3a3e" font-family="Liberation Sans,sans-serif" >0</text>
<text x="397.10" y="379.20" font-size="6.3" text-anchor="middle" fill="#3a3a3e" font-family="Liberation Sans,sans-serif" >0</text>
<text x="417.10" y="379.20" font-size="6.3" text-anchor="middle" fill="#3a3a3e" font-family="Liberation Sans,sans-serif" >0</text>
<text x="437.10" y="379.20" font-size="6.3" text-anchor="middle" fill="#3a3a3e" font-family="Liberation Sans,sans-serif" >0</text>
<text x="457.10" y="379.20" font-size="6.3" text-anchor="middle" fill="#3a3a3e" font-family="Liberation Sans,sans-serif" >0</text>
<text x="477.10" y="379.20" font-size="6.3" text-anchor="middle" fill="#3a3a3e" font-family="Liberation Sans,sans-serif" >0</text>
<text x="497.95" y="379.20" font-size="6.3" text-anchor="middle" fill="#3a3a3e" font-family="Liberation Sans,sans-serif" >0</text>
<text x="511.40" y="379.00" font-size="5.5" text-anchor="start" fill="#141416" font-family="Liberation Sans,sans-serif" font-weight="bold">#DIV/0!</text>
<text x="547.00" y="163.80" font-size="6.0" text-anchor="start" fill="#141416" font-family="Liberation Sans,sans-serif" >Karte–Nr.:</text>
<line x1="587.50" y1="164.80" x2="640.00" y2="164.80" stroke="#3a3a3e" stroke-width="0.5" />
<rect x="640.00" y="104.30" width="2.20" height="451.00" fill="#16201a" />
<rect x="10.00" y="553.50" width="632.20" height="1.80" fill="#16201a" />
<line x1="546.60" y1="209.93" x2="629.80" y2="209.93" stroke="#1e1e20" stroke-width="0.8" />
<line x1="546.60" y1="223.26" x2="629.80" y2="223.26" stroke="#1e1e20" stroke-width="0.8" />
<line x1="546.60" y1="236.59" x2="629.80" y2="236.59" stroke="#1e1e20" stroke-width="0.8" />
<line x1="546.60" y1="249.92" x2="629.80" y2="249.92" stroke="#1e1e20" stroke-width="0.8" />
<line x1="546.60" y1="263.25" x2="629.80" y2="263.25" stroke="#1e1e20" stroke-width="0.8" />
<line x1="546.60" y1="276.58" x2="629.80" y2="276.58" stroke="#1e1e20" stroke-width="0.8" />
<line x1="546.60" y1="289.91" x2="629.80" y2="289.91" stroke="#1e1e20" stroke-width="0.8" />
<line x1="546.60" y1="303.24" x2="629.80" y2="303.24" stroke="#1e1e20" stroke-width="0.8" />
<line x1="546.60" y1="316.57" x2="629.80" y2="316.57" stroke="#1e1e20" stroke-width="0.8" />
<line x1="546.60" y1="329.90" x2="629.80" y2="329.90" stroke="#1e1e20" stroke-width="0.8" />
<line x1="546.60" y1="343.23" x2="629.80" y2="343.23" stroke="#1e1e20" stroke-width="0.8" />
<line x1="546.60" y1="356.56" x2="629.80" y2="356.56" stroke="#1e1e20" stroke-width="0.8" />
<line x1="588.20" y1="196.60" x2="588.20" y2="369.89" stroke="#2a2a2c" stroke-width="0.7" />
<line x1="546.60" y1="369.89" x2="629.80" y2="369.89" stroke="#3a3a3c" stroke-width="0.6" />
<line x1="546.60" y1="196.60" x2="629.80" y2="196.60" stroke="#e4553e" stroke-width="0.6" />
<line x1="546.60" y1="196.60" x2="546.60" y2="369.89" stroke="#e4553e" stroke-width="0.6" />
<line x1="629.80" y1="196.60" x2="629.80" y2="369.89" stroke="#e4553e" stroke-width="0.6" />
<text x="546.60" y="377.40" font-size="4.8" text-anchor="middle" fill="#3a3a3e" font-family="Liberation Sans,sans-serif" >0,00</text>
<line x1="546.60" y1="369.89" x2="546.60" y2="371.89" stroke="#2a2a2c" stroke-width="0.6" />
<text x="588.20" y="377.40" font-size="4.8" text-anchor="middle" fill="#3a3a3e" font-family="Liberation Sans,sans-serif" >0,50</text>
<line x1="588.20" y1="369.89" x2="588.20" y2="371.89" stroke="#2a2a2c" stroke-width="0.6" />
<text x="629.80" y="377.40" font-size="4.8" text-anchor="middle" fill="#3a3a3e" font-family="Liberation Sans,sans-serif" >1,00</text>
<line x1="629.80" y1="369.89" x2="629.80" y2="371.89" stroke="#2a2a2c" stroke-width="0.6" />
<rect x="70.30" y="386.60" width="422.30" height="164.60" fill="#e0dfe3" stroke="#242426" stroke-width=".6"/>
<line x1="85.30" y1="394.20" x2="86.80" y2="394.20" stroke="#222224" stroke-width="0.7" />
<text x="82.80" y="396.20" font-size="5.6" text-anchor="end" fill="#3c3c40" font-family="Liberation Sans,sans-serif" >1</text>
<line x1="85.30" y1="408.98" x2="488.50" y2="408.98" stroke="#1c1c1e" stroke-width="0.6" />
<text x="82.80" y="410.98" font-size="5.6" text-anchor="end" fill="#3c3c40" font-family="Liberation Sans,sans-serif" >0,9</text>
<line x1="85.30" y1="423.76" x2="488.50" y2="423.76" stroke="#1c1c1e" stroke-width="0.6" />
<text x="82.80" y="425.76" font-size="5.6" text-anchor="end" fill="#3c3c40" font-family="Liberation Sans,sans-serif" >0,8</text>
<line x1="85.30" y1="438.54" x2="488.50" y2="438.54" stroke="#1c1c1e" stroke-width="0.6" />
<text x="82.80" y="440.54" font-size="5.6" text-anchor="end" fill="#3c3c40" font-family="Liberation Sans,sans-serif" >0,7</text>
<line x1="85.30" y1="453.32" x2="488.50" y2="453.32" stroke="#1c1c1e" stroke-width="0.6" />
<text x="82.80" y="455.32" font-size="5.6" text-anchor="end" fill="#3c3c40" font-family="Liberation Sans,sans-serif" >0,6</text>
<line x1="85.30" y1="468.10" x2="488.50" y2="468.10" stroke="#1c1c1e" stroke-width="0.6" />
<text x="82.80" y="470.10" font-size="5.6" text-anchor="end" fill="#3c3c40" font-family="Liberation Sans,sans-serif" >0,5</text>
<line x1="85.30" y1="482.88" x2="488.50" y2="482.88" stroke="#1c1c1e" stroke-width="0.6" />
<text x="82.80" y="484.88" font-size="5.6" text-anchor="end" fill="#3c3c40" font-family="Liberation Sans,sans-serif" >0,4</text>
<line x1="85.30" y1="497.66" x2="488.50" y2="497.66" stroke="#1c1c1e" stroke-width="0.6" />
<text x="82.80" y="499.66" font-size="5.6" text-anchor="end" fill="#3c3c40" font-family="Liberation Sans,sans-serif" >0,3</text>
<line x1="85.30" y1="512.44" x2="488.50" y2="512.44" stroke="#1c1c1e" stroke-width="0.6" />
<text x="82.80" y="514.44" font-size="5.6" text-anchor="end" fill="#3c3c40" font-family="Liberation Sans,sans-serif" >0,2</text>
<line x1="85.30" y1="527.22" x2="488.50" y2="527.22" stroke="#1c1c1e" stroke-width="0.6" />
<text x="82.80" y="529.22" font-size="5.6" text-anchor="end" fill="#3c3c40" font-family="Liberation Sans,sans-serif" >0,1</text>
<line x1="85.30" y1="542.00" x2="86.80" y2="542.00" stroke="#222224" stroke-width="0.7" />
<text x="82.80" y="544.00" font-size="5.6" text-anchor="end" fill="#3c3c40" font-family="Liberation Sans,sans-serif" >0</text>
<line x1="86.80" y1="394.20" x2="86.80" y2="543.50" stroke="#1c1c1e" stroke-width="0.6" />
<line x1="106.88" y1="394.20" x2="106.88" y2="543.50" stroke="#1c1c1e" stroke-width="0.6" />
<line x1="126.97" y1="394.20" x2="126.97" y2="543.50" stroke="#1c1c1e" stroke-width="0.6" />
<line x1="147.06" y1="394.20" x2="147.06" y2="543.50" stroke="#1c1c1e" stroke-width="0.6" />
<line x1="167.14" y1="394.20" x2="167.14" y2="543.50" stroke="#1c1c1e" stroke-width="0.6" />
<line x1="187.23" y1="394.20" x2="187.23" y2="543.50" stroke="#1c1c1e" stroke-width="0.6" />
<line x1="207.31" y1="394.20" x2="207.31" y2="543.50" stroke="#1c1c1e" stroke-width="0.6" />
<line x1="227.39" y1="394.20" x2="227.39" y2="543.50" stroke="#1c1c1e" stroke-width="0.6" />
<line x1="247.48" y1="394.20" x2="247.48" y2="543.50" stroke="#1c1c1e" stroke-width="0.6" />
<line x1="267.56" y1="394.20" x2="267.56" y2="543.50" stroke="#1c1c1e" stroke-width="0.6" />
<line x1="287.65" y1="394.20" x2="287.65" y2="543.50" stroke="#1c1c1e" stroke-width="0.6" />
<line x1="307.74" y1="394.20" x2="307.74" y2="543.50" stroke="#1c1c1e" stroke-width="0.6" />
<line x1="327.82" y1="394.20" x2="327.82" y2="543.50" stroke="#1c1c1e" stroke-width="0.6" />
<line x1="347.91" y1="394.20" x2="347.91" y2="543.50" stroke="#1c1c1e" stroke-width="0.6" />
<line x1="367.99" y1="394.20" x2="367.99" y2="543.50" stroke="#1c1c1e" stroke-width="0.6" />
<line x1="388.08" y1="394.20" x2="388.08" y2="543.50" stroke="#1c1c1e" stroke-width="0.6" />
<line x1="408.16" y1="394.20" x2="408.16" y2="543.50" stroke="#1c1c1e" stroke-width="0.6" />
<line x1="428.25" y1="394.20" x2="428.25" y2="543.50" stroke="#1c1c1e" stroke-width="0.6" />
<line x1="448.33" y1="394.20" x2="448.33" y2="543.50" stroke="#1c1c1e" stroke-width="0.6" />
<line x1="468.42" y1="394.20" x2="468.42" y2="543.50" stroke="#1c1c1e" stroke-width="0.6" />
<line x1="86.80" y1="394.20" x2="488.50" y2="394.20" stroke="#e4553e" stroke-width="0.8" />
<line x1="488.50" y1="394.20" x2="488.50" y2="542.00" stroke="#e4553e" stroke-width="0.8" />
<line x1="86.80" y1="542.00" x2="488.50" y2="542.00" stroke="#e4553e" stroke-width="0.8" />
<path d="M96.8 540.0l1.5 2-1.5 2-1.5-2z" fill="#ec9a2e"/>
<path d="M116.9 540.0l1.5 2-1.5 2-1.5-2z" fill="#ec9a2e"/>
<path d="M137.0 540.0l1.5 2-1.5 2-1.5-2z" fill="#ec9a2e"/>
<path d="M157.1 540.0l1.5 2-1.5 2-1.5-2z" fill="#ec9a2e"/>
<path d="M177.2 540.0l1.5 2-1.5 2-1.5-2z" fill="#ec9a2e"/>
<path d="M197.3 540.0l1.5 2-1.5 2-1.5-2z" fill="#ec9a2e"/>
<path d="M217.4 540.0l1.5 2-1.5 2-1.5-2z" fill="#ec9a2e"/>
<path d="M237.4 540.0l1.5 2-1.5 2-1.5-2z" fill="#ec9a2e"/>
<path d="M257.5 540.0l1.5 2-1.5 2-1.5-2z" fill="#ec9a2e"/>
<path d="M277.6 540.0l1.5 2-1.5 2-1.5-2z" fill="#ec9a2e"/>
<path d="M297.7 540.0l1.5 2-1.5 2-1.5-2z" fill="#ec9a2e"/>
<path d="M317.8 540.0l1.5 2-1.5 2-1.5-2z" fill="#ec9a2e"/>
<path d="M337.9 540.0l1.5 2-1.5 2-1.5-2z" fill="#ec9a2e"/>
<path d="M357.9 540.0l1.5 2-1.5 2-1.5-2z" fill="#ec9a2e"/>
<path d="M378.0 540.0l1.5 2-1.5 2-1.5-2z" fill="#ec9a2e"/>
<path d="M398.1 540.0l1.5 2-1.5 2-1.5-2z" fill="#ec9a2e"/>
<path d="M418.2 540.0l1.5 2-1.5 2-1.5-2z" fill="#ec9a2e"/>
<path d="M438.3 540.0l1.5 2-1.5 2-1.5-2z" fill="#ec9a2e"/>
<path d="M458.4 540.0l1.5 2-1.5 2-1.5-2z" fill="#ec9a2e"/>
<path d="M478.5 540.0l1.5 2-1.5 2-1.5-2z" fill="#ec9a2e"/>
<path d="M701 383H956A19 19 0 0 1 975 402V486A19 19 0 0 1 956 505H701A19 19 0 0 1 682 486V486L121 579.5L682 455V402A19 19 0 0 1 701 383Z" fill="#e0e0e5" stroke="#ea8f52" stroke-width="1.2" stroke-linejoin="round"/>
<text x="828" y="420.40" font-size="14.05" text-anchor="middle" fill="#dd6c34" font-family="Liberation Sans,DejaVu Sans,sans-serif">Tragen Sie hier die bestehenden Fehler</text>
<text x="828" y="439.55" font-size="14.05" text-anchor="middle" fill="#dd6c34" font-family="Liberation Sans,DejaVu Sans,sans-serif">nach Fehlerart und Fehlerhäufigkeit ein</text>
<text x="828" y="458.70" font-size="14.05" text-anchor="middle" fill="#dd6c34" font-family="Liberation Sans,DejaVu Sans,sans-serif">und ermitteln Sie somit den Fehler-</text>
<text x="828" y="477.85" font-size="14.05" text-anchor="middle" fill="#dd6c34" font-family="Liberation Sans,DejaVu Sans,sans-serif">verlauf im Zeitdiagramm.</text>
<text x="29.40" y="572.60" font-size="6" text-anchor="middle" fill="#eef8ee" font-family="Liberation Sans,sans-serif" >20</text>
</svg>
</body></html>
